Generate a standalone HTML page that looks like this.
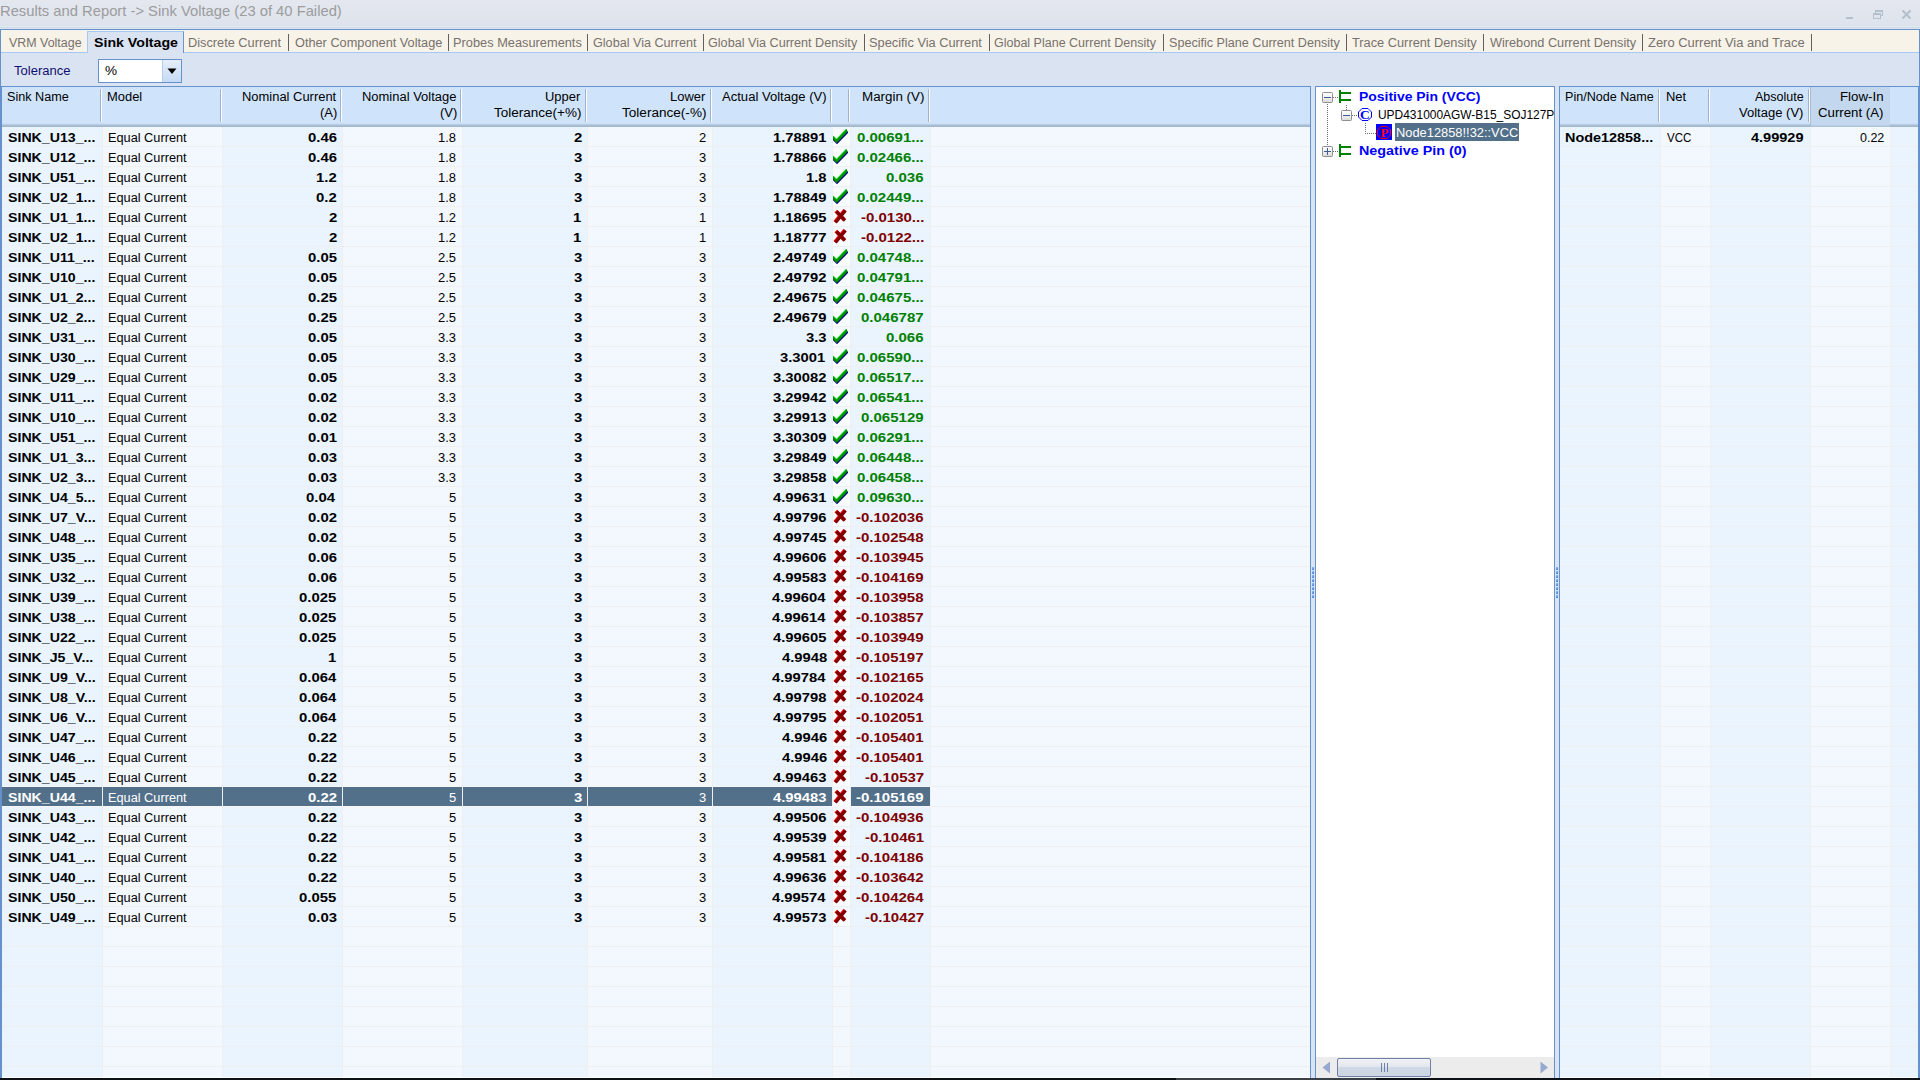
<!DOCTYPE html>
<html><head><meta charset="utf-8"><title>Sink Voltage</title>
<style>
html,body{margin:0;padding:0;width:1920px;height:1080px;overflow:hidden;background:#dae3f2}
body{position:relative;font-family:"Liberation Sans", sans-serif}
.t{position:absolute;white-space:pre;transform-origin:0 0;}
</style></head><body>
<div style="position:absolute;left:0px;top:0px;width:1920px;height:26px;background:linear-gradient(#e4e7ee,#dde3ed)"></div><div style="position:absolute;left:0px;top:26px;width:1920px;height:1px;background:#e2ebf1"></div><div style="position:absolute;left:0px;top:27px;width:1920px;height:1px;background:#cfdae8"></div><div style="position:absolute;left:0px;top:28px;width:1920px;height:1px;background:#dfe5ef"></div><div style="position:absolute;left:1846px;top:17px;width:7px;height:2px;background:#b4bfcc"></div><svg style="position:absolute;left:1870px;top:8px" width="16" height="14"><g fill="none" stroke="#b4bfcc" stroke-width="1"><rect x="5.5" y="2.5" width="7" height="5"/><rect x="3.5" y="5.5" width="7" height="5" fill="#dfe4ed"/></g><rect x="5" y="2" width="8" height="2" fill="#b4bfcc"/><rect x="3" y="5" width="8" height="2" fill="#b4bfcc"/></svg><svg style="position:absolute;left:1900px;top:8px" width="14" height="14"><path d="M2.5 2.5L10.5 10.5M10.5 2.5L2.5 10.5" stroke="#b4bfcc" stroke-width="2"/></svg><div style="position:absolute;left:0px;top:29px;width:1920px;height:1049px;background:#dae3f2"></div><div style="position:absolute;left:0px;top:29px;width:1920px;height:1px;background:#6591cd"></div><div style="position:absolute;left:0px;top:29px;width:1px;height:1049px;background:#6591cd"></div><div style="position:absolute;left:1919px;top:29px;width:1px;height:1049px;background:#6591cd"></div><div style="position:absolute;left:1px;top:30px;width:1918px;height:22px;background:#f7f3e8"></div><div style="position:absolute;left:1px;top:52px;width:1918px;height:1px;background:#a4c8f8"></div><div style="position:absolute;left:87px;top:31px;width:97px;height:22px;background:#dae3f2;border-left:1px solid #a4c8f8;border-top:1px solid #a4c8f8;border-right:1px solid #6a96d0;box-sizing:border-box"></div><div style="position:absolute;left:288px;top:34px;width:1px;height:17px;background:#5f5f5f"></div><div style="position:absolute;left:448px;top:34px;width:1px;height:17px;background:#5f5f5f"></div><div style="position:absolute;left:587px;top:34px;width:1px;height:17px;background:#5f5f5f"></div><div style="position:absolute;left:703px;top:34px;width:1px;height:17px;background:#5f5f5f"></div><div style="position:absolute;left:864px;top:34px;width:1px;height:17px;background:#5f5f5f"></div><div style="position:absolute;left:989px;top:34px;width:1px;height:17px;background:#5f5f5f"></div><div style="position:absolute;left:1163px;top:34px;width:1px;height:17px;background:#5f5f5f"></div><div style="position:absolute;left:1346px;top:34px;width:1px;height:17px;background:#5f5f5f"></div><div style="position:absolute;left:1483px;top:34px;width:1px;height:17px;background:#5f5f5f"></div><div style="position:absolute;left:1642px;top:34px;width:1px;height:17px;background:#5f5f5f"></div><div style="position:absolute;left:1811px;top:34px;width:1px;height:17px;background:#5f5f5f"></div><div style="position:absolute;left:98px;top:59px;width:84px;height:24px;background:#fff;border:1px solid #6591cd;box-sizing:border-box"></div><div style="position:absolute;left:162px;top:60px;width:19px;height:22px;background:linear-gradient(#e6eef9,#c5dbf4);border-left:1px solid #b5cdea;box-sizing:border-box"></div><svg style="position:absolute;left:167px;top:68px" width="11" height="7"><path d="M0.5 0.5H9.5L5 6z" fill="#000"/></svg><div style="position:absolute;left:1px;top:86px;width:1310px;height:992px;background:#f3f7fe"></div><div style="position:absolute;left:1px;top:86px;width:1310px;height:1px;background:#6591cd"></div><div style="position:absolute;left:1px;top:86px;width:1px;height:992px;background:#6591cd"></div><div style="position:absolute;left:1310px;top:86px;width:1px;height:992px;background:#6591cd"></div><div style="position:absolute;left:2px;top:87px;width:1308px;height:37px;background:#cfe4fb"></div><div style="position:absolute;left:2px;top:123px;width:1308px;height:1px;background:#cadef5"></div><div style="position:absolute;left:2px;top:124px;width:1308px;height:1px;background:#b9cde3"></div><div style="position:absolute;left:2px;top:125px;width:1308px;height:1px;background:#a9bdd3"></div><div style="position:absolute;left:2px;top:126px;width:1308px;height:1px;background:#a3b7ce"></div><div style="position:absolute;left:2px;top:127px;width:100px;height:950px;background:#e9f4fe"></div><div style="position:absolute;left:103px;top:127px;width:119px;height:950px;background:#f3f7fe"></div><div style="position:absolute;left:223px;top:127px;width:119px;height:950px;background:#e9f4fe"></div><div style="position:absolute;left:343px;top:127px;width:119px;height:950px;background:#f3f7fe"></div><div style="position:absolute;left:463px;top:127px;width:124px;height:950px;background:#e9f4fe"></div><div style="position:absolute;left:588px;top:127px;width:124px;height:950px;background:#f3f7fe"></div><div style="position:absolute;left:713px;top:127px;width:119px;height:950px;background:#e9f4fe"></div><div style="position:absolute;left:833px;top:127px;width:17px;height:950px;background:#f3f7fe"></div><div style="position:absolute;left:851px;top:127px;width:79px;height:950px;background:#e9f4fe"></div><div style="position:absolute;left:931px;top:127px;width:379px;height:950px;background:#f3f7fe"></div><div style="position:absolute;left:102px;top:127px;width:1px;height:950px;background:#efefef"></div><div style="position:absolute;left:100px;top:89px;width:1px;height:33px;background:#9fb3cc"></div><div style="position:absolute;left:101px;top:89px;width:1px;height:33px;background:#ffffff"></div><div style="position:absolute;left:222px;top:127px;width:1px;height:950px;background:#efefef"></div><div style="position:absolute;left:220px;top:89px;width:1px;height:33px;background:#9fb3cc"></div><div style="position:absolute;left:221px;top:89px;width:1px;height:33px;background:#ffffff"></div><div style="position:absolute;left:342px;top:127px;width:1px;height:950px;background:#efefef"></div><div style="position:absolute;left:340px;top:89px;width:1px;height:33px;background:#9fb3cc"></div><div style="position:absolute;left:341px;top:89px;width:1px;height:33px;background:#ffffff"></div><div style="position:absolute;left:462px;top:127px;width:1px;height:950px;background:#efefef"></div><div style="position:absolute;left:460px;top:89px;width:1px;height:33px;background:#9fb3cc"></div><div style="position:absolute;left:461px;top:89px;width:1px;height:33px;background:#ffffff"></div><div style="position:absolute;left:587px;top:127px;width:1px;height:950px;background:#efefef"></div><div style="position:absolute;left:585px;top:89px;width:1px;height:33px;background:#9fb3cc"></div><div style="position:absolute;left:586px;top:89px;width:1px;height:33px;background:#ffffff"></div><div style="position:absolute;left:712px;top:127px;width:1px;height:950px;background:#efefef"></div><div style="position:absolute;left:710px;top:89px;width:1px;height:33px;background:#9fb3cc"></div><div style="position:absolute;left:711px;top:89px;width:1px;height:33px;background:#ffffff"></div><div style="position:absolute;left:832px;top:127px;width:1px;height:950px;background:#efefef"></div><div style="position:absolute;left:830px;top:89px;width:1px;height:33px;background:#9fb3cc"></div><div style="position:absolute;left:831px;top:89px;width:1px;height:33px;background:#ffffff"></div><div style="position:absolute;left:850px;top:127px;width:1px;height:950px;background:#efefef"></div><div style="position:absolute;left:848px;top:89px;width:1px;height:33px;background:#9fb3cc"></div><div style="position:absolute;left:849px;top:89px;width:1px;height:33px;background:#ffffff"></div><div style="position:absolute;left:930px;top:127px;width:1px;height:950px;background:#efefef"></div><div style="position:absolute;left:928px;top:89px;width:1px;height:33px;background:#9fb3cc"></div><div style="position:absolute;left:929px;top:89px;width:1px;height:33px;background:#ffffff"></div><div style="position:absolute;left:2px;top:146px;width:1308px;height:1px;background:#efefef"></div><div style="position:absolute;left:2px;top:166px;width:1308px;height:1px;background:#efefef"></div><div style="position:absolute;left:2px;top:186px;width:1308px;height:1px;background:#efefef"></div><div style="position:absolute;left:2px;top:206px;width:1308px;height:1px;background:#efefef"></div><div style="position:absolute;left:2px;top:226px;width:1308px;height:1px;background:#efefef"></div><div style="position:absolute;left:2px;top:246px;width:1308px;height:1px;background:#efefef"></div><div style="position:absolute;left:2px;top:266px;width:1308px;height:1px;background:#efefef"></div><div style="position:absolute;left:2px;top:286px;width:1308px;height:1px;background:#efefef"></div><div style="position:absolute;left:2px;top:306px;width:1308px;height:1px;background:#efefef"></div><div style="position:absolute;left:2px;top:326px;width:1308px;height:1px;background:#efefef"></div><div style="position:absolute;left:2px;top:346px;width:1308px;height:1px;background:#efefef"></div><div style="position:absolute;left:2px;top:366px;width:1308px;height:1px;background:#efefef"></div><div style="position:absolute;left:2px;top:386px;width:1308px;height:1px;background:#efefef"></div><div style="position:absolute;left:2px;top:406px;width:1308px;height:1px;background:#efefef"></div><div style="position:absolute;left:2px;top:426px;width:1308px;height:1px;background:#efefef"></div><div style="position:absolute;left:2px;top:446px;width:1308px;height:1px;background:#efefef"></div><div style="position:absolute;left:2px;top:466px;width:1308px;height:1px;background:#efefef"></div><div style="position:absolute;left:2px;top:486px;width:1308px;height:1px;background:#efefef"></div><div style="position:absolute;left:2px;top:506px;width:1308px;height:1px;background:#efefef"></div><div style="position:absolute;left:2px;top:526px;width:1308px;height:1px;background:#efefef"></div><div style="position:absolute;left:2px;top:546px;width:1308px;height:1px;background:#efefef"></div><div style="position:absolute;left:2px;top:566px;width:1308px;height:1px;background:#efefef"></div><div style="position:absolute;left:2px;top:586px;width:1308px;height:1px;background:#efefef"></div><div style="position:absolute;left:2px;top:606px;width:1308px;height:1px;background:#efefef"></div><div style="position:absolute;left:2px;top:626px;width:1308px;height:1px;background:#efefef"></div><div style="position:absolute;left:2px;top:646px;width:1308px;height:1px;background:#efefef"></div><div style="position:absolute;left:2px;top:666px;width:1308px;height:1px;background:#efefef"></div><div style="position:absolute;left:2px;top:686px;width:1308px;height:1px;background:#efefef"></div><div style="position:absolute;left:2px;top:706px;width:1308px;height:1px;background:#efefef"></div><div style="position:absolute;left:2px;top:726px;width:1308px;height:1px;background:#efefef"></div><div style="position:absolute;left:2px;top:746px;width:1308px;height:1px;background:#efefef"></div><div style="position:absolute;left:2px;top:766px;width:1308px;height:1px;background:#efefef"></div><div style="position:absolute;left:2px;top:786px;width:1308px;height:1px;background:#efefef"></div><div style="position:absolute;left:2px;top:806px;width:1308px;height:1px;background:#efefef"></div><div style="position:absolute;left:2px;top:826px;width:1308px;height:1px;background:#efefef"></div><div style="position:absolute;left:2px;top:846px;width:1308px;height:1px;background:#efefef"></div><div style="position:absolute;left:2px;top:866px;width:1308px;height:1px;background:#efefef"></div><div style="position:absolute;left:2px;top:886px;width:1308px;height:1px;background:#efefef"></div><div style="position:absolute;left:2px;top:906px;width:1308px;height:1px;background:#efefef"></div><div style="position:absolute;left:2px;top:926px;width:1308px;height:1px;background:#efefef"></div><div style="position:absolute;left:2px;top:946px;width:1308px;height:1px;background:#efefef"></div><div style="position:absolute;left:2px;top:966px;width:1308px;height:1px;background:#efefef"></div><div style="position:absolute;left:2px;top:986px;width:1308px;height:1px;background:#efefef"></div><div style="position:absolute;left:2px;top:1006px;width:1308px;height:1px;background:#efefef"></div><div style="position:absolute;left:2px;top:1026px;width:1308px;height:1px;background:#efefef"></div><div style="position:absolute;left:2px;top:1046px;width:1308px;height:1px;background:#efefef"></div><div style="position:absolute;left:2px;top:1066px;width:1308px;height:1px;background:#efefef"></div><div style="position:absolute;left:2px;top:1077px;width:1308px;height:1px;background:#ffffff"></div><div style="position:absolute;left:833px;top:129px;width:17px;height:17px;background:#f9fcff"></div><svg style="position:absolute;left:832px;top:128px" width="18" height="18" viewBox="0 0 18 18"><path d="M1 8.2L4.5 11.7L14.5 1.2L16.2 4.8L5 16.2L1 12.2Z" fill="#000080"/><path d="M1.1 7.9L4.5 11.2L14.4 0.9L15.4 3.8L4.7 15.1L1.1 11.4Z" fill="#009000"/><path d="M1.3 7.9L4.5 11.2L14.4 1" fill="none" stroke="#00f000" stroke-width="0.9"/></svg><div style="position:absolute;left:833px;top:149px;width:17px;height:17px;background:#f9fcff"></div><svg style="position:absolute;left:832px;top:148px" width="18" height="18" viewBox="0 0 18 18"><path d="M1 8.2L4.5 11.7L14.5 1.2L16.2 4.8L5 16.2L1 12.2Z" fill="#000080"/><path d="M1.1 7.9L4.5 11.2L14.4 0.9L15.4 3.8L4.7 15.1L1.1 11.4Z" fill="#009000"/><path d="M1.3 7.9L4.5 11.2L14.4 1" fill="none" stroke="#00f000" stroke-width="0.9"/></svg><div style="position:absolute;left:833px;top:169px;width:17px;height:17px;background:#f9fcff"></div><svg style="position:absolute;left:832px;top:168px" width="18" height="18" viewBox="0 0 18 18"><path d="M1 8.2L4.5 11.7L14.5 1.2L16.2 4.8L5 16.2L1 12.2Z" fill="#000080"/><path d="M1.1 7.9L4.5 11.2L14.4 0.9L15.4 3.8L4.7 15.1L1.1 11.4Z" fill="#009000"/><path d="M1.3 7.9L4.5 11.2L14.4 1" fill="none" stroke="#00f000" stroke-width="0.9"/></svg><div style="position:absolute;left:833px;top:189px;width:17px;height:17px;background:#f9fcff"></div><svg style="position:absolute;left:832px;top:188px" width="18" height="18" viewBox="0 0 18 18"><path d="M1 8.2L4.5 11.7L14.5 1.2L16.2 4.8L5 16.2L1 12.2Z" fill="#000080"/><path d="M1.1 7.9L4.5 11.2L14.4 0.9L15.4 3.8L4.7 15.1L1.1 11.4Z" fill="#009000"/><path d="M1.3 7.9L4.5 11.2L14.4 1" fill="none" stroke="#00f000" stroke-width="0.9"/></svg><div style="position:absolute;left:833px;top:209px;width:17px;height:17px;background:#f9fcff"></div><svg style="position:absolute;left:832px;top:209px" width="18" height="18" viewBox="0 0 18 18"><path d="M4.5 2.5L13 11.5M13.5 1.5L3.5 13.5" stroke="#ff0000" stroke-width="3.5" transform="translate(-0.7,-0.5)"/><path d="M4.5 2.5L13 11.5M13.5 1.5L3.5 13.5" stroke="#800000" stroke-width="3.3"/></svg><div style="position:absolute;left:833px;top:229px;width:17px;height:17px;background:#f9fcff"></div><svg style="position:absolute;left:832px;top:229px" width="18" height="18" viewBox="0 0 18 18"><path d="M4.5 2.5L13 11.5M13.5 1.5L3.5 13.5" stroke="#ff0000" stroke-width="3.5" transform="translate(-0.7,-0.5)"/><path d="M4.5 2.5L13 11.5M13.5 1.5L3.5 13.5" stroke="#800000" stroke-width="3.3"/></svg><div style="position:absolute;left:833px;top:249px;width:17px;height:17px;background:#f9fcff"></div><svg style="position:absolute;left:832px;top:248px" width="18" height="18" viewBox="0 0 18 18"><path d="M1 8.2L4.5 11.7L14.5 1.2L16.2 4.8L5 16.2L1 12.2Z" fill="#000080"/><path d="M1.1 7.9L4.5 11.2L14.4 0.9L15.4 3.8L4.7 15.1L1.1 11.4Z" fill="#009000"/><path d="M1.3 7.9L4.5 11.2L14.4 1" fill="none" stroke="#00f000" stroke-width="0.9"/></svg><div style="position:absolute;left:833px;top:269px;width:17px;height:17px;background:#f9fcff"></div><svg style="position:absolute;left:832px;top:268px" width="18" height="18" viewBox="0 0 18 18"><path d="M1 8.2L4.5 11.7L14.5 1.2L16.2 4.8L5 16.2L1 12.2Z" fill="#000080"/><path d="M1.1 7.9L4.5 11.2L14.4 0.9L15.4 3.8L4.7 15.1L1.1 11.4Z" fill="#009000"/><path d="M1.3 7.9L4.5 11.2L14.4 1" fill="none" stroke="#00f000" stroke-width="0.9"/></svg><div style="position:absolute;left:833px;top:289px;width:17px;height:17px;background:#f9fcff"></div><svg style="position:absolute;left:832px;top:288px" width="18" height="18" viewBox="0 0 18 18"><path d="M1 8.2L4.5 11.7L14.5 1.2L16.2 4.8L5 16.2L1 12.2Z" fill="#000080"/><path d="M1.1 7.9L4.5 11.2L14.4 0.9L15.4 3.8L4.7 15.1L1.1 11.4Z" fill="#009000"/><path d="M1.3 7.9L4.5 11.2L14.4 1" fill="none" stroke="#00f000" stroke-width="0.9"/></svg><div style="position:absolute;left:833px;top:309px;width:17px;height:17px;background:#f9fcff"></div><svg style="position:absolute;left:832px;top:308px" width="18" height="18" viewBox="0 0 18 18"><path d="M1 8.2L4.5 11.7L14.5 1.2L16.2 4.8L5 16.2L1 12.2Z" fill="#000080"/><path d="M1.1 7.9L4.5 11.2L14.4 0.9L15.4 3.8L4.7 15.1L1.1 11.4Z" fill="#009000"/><path d="M1.3 7.9L4.5 11.2L14.4 1" fill="none" stroke="#00f000" stroke-width="0.9"/></svg><div style="position:absolute;left:833px;top:329px;width:17px;height:17px;background:#f9fcff"></div><svg style="position:absolute;left:832px;top:328px" width="18" height="18" viewBox="0 0 18 18"><path d="M1 8.2L4.5 11.7L14.5 1.2L16.2 4.8L5 16.2L1 12.2Z" fill="#000080"/><path d="M1.1 7.9L4.5 11.2L14.4 0.9L15.4 3.8L4.7 15.1L1.1 11.4Z" fill="#009000"/><path d="M1.3 7.9L4.5 11.2L14.4 1" fill="none" stroke="#00f000" stroke-width="0.9"/></svg><div style="position:absolute;left:833px;top:349px;width:17px;height:17px;background:#f9fcff"></div><svg style="position:absolute;left:832px;top:348px" width="18" height="18" viewBox="0 0 18 18"><path d="M1 8.2L4.5 11.7L14.5 1.2L16.2 4.8L5 16.2L1 12.2Z" fill="#000080"/><path d="M1.1 7.9L4.5 11.2L14.4 0.9L15.4 3.8L4.7 15.1L1.1 11.4Z" fill="#009000"/><path d="M1.3 7.9L4.5 11.2L14.4 1" fill="none" stroke="#00f000" stroke-width="0.9"/></svg><div style="position:absolute;left:833px;top:369px;width:17px;height:17px;background:#f9fcff"></div><svg style="position:absolute;left:832px;top:368px" width="18" height="18" viewBox="0 0 18 18"><path d="M1 8.2L4.5 11.7L14.5 1.2L16.2 4.8L5 16.2L1 12.2Z" fill="#000080"/><path d="M1.1 7.9L4.5 11.2L14.4 0.9L15.4 3.8L4.7 15.1L1.1 11.4Z" fill="#009000"/><path d="M1.3 7.9L4.5 11.2L14.4 1" fill="none" stroke="#00f000" stroke-width="0.9"/></svg><div style="position:absolute;left:833px;top:389px;width:17px;height:17px;background:#f9fcff"></div><svg style="position:absolute;left:832px;top:388px" width="18" height="18" viewBox="0 0 18 18"><path d="M1 8.2L4.5 11.7L14.5 1.2L16.2 4.8L5 16.2L1 12.2Z" fill="#000080"/><path d="M1.1 7.9L4.5 11.2L14.4 0.9L15.4 3.8L4.7 15.1L1.1 11.4Z" fill="#009000"/><path d="M1.3 7.9L4.5 11.2L14.4 1" fill="none" stroke="#00f000" stroke-width="0.9"/></svg><div style="position:absolute;left:833px;top:409px;width:17px;height:17px;background:#f9fcff"></div><svg style="position:absolute;left:832px;top:408px" width="18" height="18" viewBox="0 0 18 18"><path d="M1 8.2L4.5 11.7L14.5 1.2L16.2 4.8L5 16.2L1 12.2Z" fill="#000080"/><path d="M1.1 7.9L4.5 11.2L14.4 0.9L15.4 3.8L4.7 15.1L1.1 11.4Z" fill="#009000"/><path d="M1.3 7.9L4.5 11.2L14.4 1" fill="none" stroke="#00f000" stroke-width="0.9"/></svg><div style="position:absolute;left:833px;top:429px;width:17px;height:17px;background:#f9fcff"></div><svg style="position:absolute;left:832px;top:428px" width="18" height="18" viewBox="0 0 18 18"><path d="M1 8.2L4.5 11.7L14.5 1.2L16.2 4.8L5 16.2L1 12.2Z" fill="#000080"/><path d="M1.1 7.9L4.5 11.2L14.4 0.9L15.4 3.8L4.7 15.1L1.1 11.4Z" fill="#009000"/><path d="M1.3 7.9L4.5 11.2L14.4 1" fill="none" stroke="#00f000" stroke-width="0.9"/></svg><div style="position:absolute;left:833px;top:449px;width:17px;height:17px;background:#f9fcff"></div><svg style="position:absolute;left:832px;top:448px" width="18" height="18" viewBox="0 0 18 18"><path d="M1 8.2L4.5 11.7L14.5 1.2L16.2 4.8L5 16.2L1 12.2Z" fill="#000080"/><path d="M1.1 7.9L4.5 11.2L14.4 0.9L15.4 3.8L4.7 15.1L1.1 11.4Z" fill="#009000"/><path d="M1.3 7.9L4.5 11.2L14.4 1" fill="none" stroke="#00f000" stroke-width="0.9"/></svg><div style="position:absolute;left:833px;top:469px;width:17px;height:17px;background:#f9fcff"></div><svg style="position:absolute;left:832px;top:468px" width="18" height="18" viewBox="0 0 18 18"><path d="M1 8.2L4.5 11.7L14.5 1.2L16.2 4.8L5 16.2L1 12.2Z" fill="#000080"/><path d="M1.1 7.9L4.5 11.2L14.4 0.9L15.4 3.8L4.7 15.1L1.1 11.4Z" fill="#009000"/><path d="M1.3 7.9L4.5 11.2L14.4 1" fill="none" stroke="#00f000" stroke-width="0.9"/></svg><div style="position:absolute;left:833px;top:489px;width:17px;height:17px;background:#f9fcff"></div><svg style="position:absolute;left:832px;top:488px" width="18" height="18" viewBox="0 0 18 18"><path d="M1 8.2L4.5 11.7L14.5 1.2L16.2 4.8L5 16.2L1 12.2Z" fill="#000080"/><path d="M1.1 7.9L4.5 11.2L14.4 0.9L15.4 3.8L4.7 15.1L1.1 11.4Z" fill="#009000"/><path d="M1.3 7.9L4.5 11.2L14.4 1" fill="none" stroke="#00f000" stroke-width="0.9"/></svg><div style="position:absolute;left:833px;top:509px;width:17px;height:17px;background:#f9fcff"></div><svg style="position:absolute;left:832px;top:509px" width="18" height="18" viewBox="0 0 18 18"><path d="M4.5 2.5L13 11.5M13.5 1.5L3.5 13.5" stroke="#ff0000" stroke-width="3.5" transform="translate(-0.7,-0.5)"/><path d="M4.5 2.5L13 11.5M13.5 1.5L3.5 13.5" stroke="#800000" stroke-width="3.3"/></svg><div style="position:absolute;left:833px;top:529px;width:17px;height:17px;background:#f9fcff"></div><svg style="position:absolute;left:832px;top:529px" width="18" height="18" viewBox="0 0 18 18"><path d="M4.5 2.5L13 11.5M13.5 1.5L3.5 13.5" stroke="#ff0000" stroke-width="3.5" transform="translate(-0.7,-0.5)"/><path d="M4.5 2.5L13 11.5M13.5 1.5L3.5 13.5" stroke="#800000" stroke-width="3.3"/></svg><div style="position:absolute;left:833px;top:549px;width:17px;height:17px;background:#f9fcff"></div><svg style="position:absolute;left:832px;top:549px" width="18" height="18" viewBox="0 0 18 18"><path d="M4.5 2.5L13 11.5M13.5 1.5L3.5 13.5" stroke="#ff0000" stroke-width="3.5" transform="translate(-0.7,-0.5)"/><path d="M4.5 2.5L13 11.5M13.5 1.5L3.5 13.5" stroke="#800000" stroke-width="3.3"/></svg><div style="position:absolute;left:833px;top:569px;width:17px;height:17px;background:#f9fcff"></div><svg style="position:absolute;left:832px;top:569px" width="18" height="18" viewBox="0 0 18 18"><path d="M4.5 2.5L13 11.5M13.5 1.5L3.5 13.5" stroke="#ff0000" stroke-width="3.5" transform="translate(-0.7,-0.5)"/><path d="M4.5 2.5L13 11.5M13.5 1.5L3.5 13.5" stroke="#800000" stroke-width="3.3"/></svg><div style="position:absolute;left:833px;top:589px;width:17px;height:17px;background:#f9fcff"></div><svg style="position:absolute;left:832px;top:589px" width="18" height="18" viewBox="0 0 18 18"><path d="M4.5 2.5L13 11.5M13.5 1.5L3.5 13.5" stroke="#ff0000" stroke-width="3.5" transform="translate(-0.7,-0.5)"/><path d="M4.5 2.5L13 11.5M13.5 1.5L3.5 13.5" stroke="#800000" stroke-width="3.3"/></svg><div style="position:absolute;left:833px;top:609px;width:17px;height:17px;background:#f9fcff"></div><svg style="position:absolute;left:832px;top:609px" width="18" height="18" viewBox="0 0 18 18"><path d="M4.5 2.5L13 11.5M13.5 1.5L3.5 13.5" stroke="#ff0000" stroke-width="3.5" transform="translate(-0.7,-0.5)"/><path d="M4.5 2.5L13 11.5M13.5 1.5L3.5 13.5" stroke="#800000" stroke-width="3.3"/></svg><div style="position:absolute;left:833px;top:629px;width:17px;height:17px;background:#f9fcff"></div><svg style="position:absolute;left:832px;top:629px" width="18" height="18" viewBox="0 0 18 18"><path d="M4.5 2.5L13 11.5M13.5 1.5L3.5 13.5" stroke="#ff0000" stroke-width="3.5" transform="translate(-0.7,-0.5)"/><path d="M4.5 2.5L13 11.5M13.5 1.5L3.5 13.5" stroke="#800000" stroke-width="3.3"/></svg><div style="position:absolute;left:833px;top:649px;width:17px;height:17px;background:#f9fcff"></div><svg style="position:absolute;left:832px;top:649px" width="18" height="18" viewBox="0 0 18 18"><path d="M4.5 2.5L13 11.5M13.5 1.5L3.5 13.5" stroke="#ff0000" stroke-width="3.5" transform="translate(-0.7,-0.5)"/><path d="M4.5 2.5L13 11.5M13.5 1.5L3.5 13.5" stroke="#800000" stroke-width="3.3"/></svg><div style="position:absolute;left:833px;top:669px;width:17px;height:17px;background:#f9fcff"></div><svg style="position:absolute;left:832px;top:669px" width="18" height="18" viewBox="0 0 18 18"><path d="M4.5 2.5L13 11.5M13.5 1.5L3.5 13.5" stroke="#ff0000" stroke-width="3.5" transform="translate(-0.7,-0.5)"/><path d="M4.5 2.5L13 11.5M13.5 1.5L3.5 13.5" stroke="#800000" stroke-width="3.3"/></svg><div style="position:absolute;left:833px;top:689px;width:17px;height:17px;background:#f9fcff"></div><svg style="position:absolute;left:832px;top:689px" width="18" height="18" viewBox="0 0 18 18"><path d="M4.5 2.5L13 11.5M13.5 1.5L3.5 13.5" stroke="#ff0000" stroke-width="3.5" transform="translate(-0.7,-0.5)"/><path d="M4.5 2.5L13 11.5M13.5 1.5L3.5 13.5" stroke="#800000" stroke-width="3.3"/></svg><div style="position:absolute;left:833px;top:709px;width:17px;height:17px;background:#f9fcff"></div><svg style="position:absolute;left:832px;top:709px" width="18" height="18" viewBox="0 0 18 18"><path d="M4.5 2.5L13 11.5M13.5 1.5L3.5 13.5" stroke="#ff0000" stroke-width="3.5" transform="translate(-0.7,-0.5)"/><path d="M4.5 2.5L13 11.5M13.5 1.5L3.5 13.5" stroke="#800000" stroke-width="3.3"/></svg><div style="position:absolute;left:833px;top:729px;width:17px;height:17px;background:#f9fcff"></div><svg style="position:absolute;left:832px;top:729px" width="18" height="18" viewBox="0 0 18 18"><path d="M4.5 2.5L13 11.5M13.5 1.5L3.5 13.5" stroke="#ff0000" stroke-width="3.5" transform="translate(-0.7,-0.5)"/><path d="M4.5 2.5L13 11.5M13.5 1.5L3.5 13.5" stroke="#800000" stroke-width="3.3"/></svg><div style="position:absolute;left:833px;top:749px;width:17px;height:17px;background:#f9fcff"></div><svg style="position:absolute;left:832px;top:749px" width="18" height="18" viewBox="0 0 18 18"><path d="M4.5 2.5L13 11.5M13.5 1.5L3.5 13.5" stroke="#ff0000" stroke-width="3.5" transform="translate(-0.7,-0.5)"/><path d="M4.5 2.5L13 11.5M13.5 1.5L3.5 13.5" stroke="#800000" stroke-width="3.3"/></svg><div style="position:absolute;left:833px;top:769px;width:17px;height:17px;background:#f9fcff"></div><svg style="position:absolute;left:832px;top:769px" width="18" height="18" viewBox="0 0 18 18"><path d="M4.5 2.5L13 11.5M13.5 1.5L3.5 13.5" stroke="#ff0000" stroke-width="3.5" transform="translate(-0.7,-0.5)"/><path d="M4.5 2.5L13 11.5M13.5 1.5L3.5 13.5" stroke="#800000" stroke-width="3.3"/></svg><div style="position:absolute;left:2px;top:787px;width:100px;height:19px;background:#53708a"></div><div style="position:absolute;left:103px;top:787px;width:119px;height:19px;background:#53708a"></div><div style="position:absolute;left:223px;top:787px;width:119px;height:19px;background:#53708a"></div><div style="position:absolute;left:343px;top:787px;width:119px;height:19px;background:#53708a"></div><div style="position:absolute;left:463px;top:787px;width:124px;height:19px;background:#53708a"></div><div style="position:absolute;left:588px;top:787px;width:124px;height:19px;background:#53708a"></div><div style="position:absolute;left:713px;top:787px;width:119px;height:19px;background:#53708a"></div><div style="position:absolute;left:851px;top:787px;width:79px;height:19px;background:#53708a"></div><div style="position:absolute;left:2px;top:786px;width:929px;height:1px;background:#f6f6f6"></div><div style="position:absolute;left:2px;top:806px;width:929px;height:1px;background:#f6f6f6"></div><div style="position:absolute;left:833px;top:789px;width:17px;height:17px;background:#f9fcff"></div><svg style="position:absolute;left:832px;top:789px" width="18" height="18" viewBox="0 0 18 18"><path d="M4.5 2.5L13 11.5M13.5 1.5L3.5 13.5" stroke="#ff0000" stroke-width="3.5" transform="translate(-0.7,-0.5)"/><path d="M4.5 2.5L13 11.5M13.5 1.5L3.5 13.5" stroke="#800000" stroke-width="3.3"/></svg><div style="position:absolute;left:833px;top:809px;width:17px;height:17px;background:#f9fcff"></div><svg style="position:absolute;left:832px;top:809px" width="18" height="18" viewBox="0 0 18 18"><path d="M4.5 2.5L13 11.5M13.5 1.5L3.5 13.5" stroke="#ff0000" stroke-width="3.5" transform="translate(-0.7,-0.5)"/><path d="M4.5 2.5L13 11.5M13.5 1.5L3.5 13.5" stroke="#800000" stroke-width="3.3"/></svg><div style="position:absolute;left:833px;top:829px;width:17px;height:17px;background:#f9fcff"></div><svg style="position:absolute;left:832px;top:829px" width="18" height="18" viewBox="0 0 18 18"><path d="M4.5 2.5L13 11.5M13.5 1.5L3.5 13.5" stroke="#ff0000" stroke-width="3.5" transform="translate(-0.7,-0.5)"/><path d="M4.5 2.5L13 11.5M13.5 1.5L3.5 13.5" stroke="#800000" stroke-width="3.3"/></svg><div style="position:absolute;left:833px;top:849px;width:17px;height:17px;background:#f9fcff"></div><svg style="position:absolute;left:832px;top:849px" width="18" height="18" viewBox="0 0 18 18"><path d="M4.5 2.5L13 11.5M13.5 1.5L3.5 13.5" stroke="#ff0000" stroke-width="3.5" transform="translate(-0.7,-0.5)"/><path d="M4.5 2.5L13 11.5M13.5 1.5L3.5 13.5" stroke="#800000" stroke-width="3.3"/></svg><div style="position:absolute;left:833px;top:869px;width:17px;height:17px;background:#f9fcff"></div><svg style="position:absolute;left:832px;top:869px" width="18" height="18" viewBox="0 0 18 18"><path d="M4.5 2.5L13 11.5M13.5 1.5L3.5 13.5" stroke="#ff0000" stroke-width="3.5" transform="translate(-0.7,-0.5)"/><path d="M4.5 2.5L13 11.5M13.5 1.5L3.5 13.5" stroke="#800000" stroke-width="3.3"/></svg><div style="position:absolute;left:833px;top:889px;width:17px;height:17px;background:#f9fcff"></div><svg style="position:absolute;left:832px;top:889px" width="18" height="18" viewBox="0 0 18 18"><path d="M4.5 2.5L13 11.5M13.5 1.5L3.5 13.5" stroke="#ff0000" stroke-width="3.5" transform="translate(-0.7,-0.5)"/><path d="M4.5 2.5L13 11.5M13.5 1.5L3.5 13.5" stroke="#800000" stroke-width="3.3"/></svg><div style="position:absolute;left:833px;top:909px;width:17px;height:17px;background:#f9fcff"></div><svg style="position:absolute;left:832px;top:909px" width="18" height="18" viewBox="0 0 18 18"><path d="M4.5 2.5L13 11.5M13.5 1.5L3.5 13.5" stroke="#ff0000" stroke-width="3.5" transform="translate(-0.7,-0.5)"/><path d="M4.5 2.5L13 11.5M13.5 1.5L3.5 13.5" stroke="#800000" stroke-width="3.3"/></svg><div style="position:absolute;left:1312px;top:567px;width:2px;height:3px;background:linear-gradient(135deg,#9cc8ff,#3f6fc0)"></div><div style="position:absolute;left:1312px;top:571px;width:2px;height:3px;background:linear-gradient(135deg,#9cc8ff,#3f6fc0)"></div><div style="position:absolute;left:1312px;top:575px;width:2px;height:3px;background:linear-gradient(135deg,#9cc8ff,#3f6fc0)"></div><div style="position:absolute;left:1312px;top:579px;width:2px;height:3px;background:linear-gradient(135deg,#9cc8ff,#3f6fc0)"></div><div style="position:absolute;left:1312px;top:583px;width:2px;height:3px;background:linear-gradient(135deg,#9cc8ff,#3f6fc0)"></div><div style="position:absolute;left:1312px;top:587px;width:2px;height:3px;background:linear-gradient(135deg,#9cc8ff,#3f6fc0)"></div><div style="position:absolute;left:1312px;top:591px;width:2px;height:3px;background:linear-gradient(135deg,#9cc8ff,#3f6fc0)"></div><div style="position:absolute;left:1312px;top:595px;width:2px;height:3px;background:linear-gradient(135deg,#9cc8ff,#3f6fc0)"></div><div style="position:absolute;left:1556px;top:567px;width:2px;height:3px;background:linear-gradient(135deg,#9cc8ff,#3f6fc0)"></div><div style="position:absolute;left:1556px;top:571px;width:2px;height:3px;background:linear-gradient(135deg,#9cc8ff,#3f6fc0)"></div><div style="position:absolute;left:1556px;top:575px;width:2px;height:3px;background:linear-gradient(135deg,#9cc8ff,#3f6fc0)"></div><div style="position:absolute;left:1556px;top:579px;width:2px;height:3px;background:linear-gradient(135deg,#9cc8ff,#3f6fc0)"></div><div style="position:absolute;left:1556px;top:583px;width:2px;height:3px;background:linear-gradient(135deg,#9cc8ff,#3f6fc0)"></div><div style="position:absolute;left:1556px;top:587px;width:2px;height:3px;background:linear-gradient(135deg,#9cc8ff,#3f6fc0)"></div><div style="position:absolute;left:1556px;top:591px;width:2px;height:3px;background:linear-gradient(135deg,#9cc8ff,#3f6fc0)"></div><div style="position:absolute;left:1556px;top:595px;width:2px;height:3px;background:linear-gradient(135deg,#9cc8ff,#3f6fc0)"></div><div style="position:absolute;left:1315px;top:86px;width:240px;height:992px;background:#fff"></div><div style="position:absolute;left:1315px;top:86px;width:240px;height:1px;background:#6591cd"></div><div style="position:absolute;left:1315px;top:86px;width:1px;height:992px;background:#6591cd"></div><div style="position:absolute;left:1554px;top:86px;width:1px;height:992px;background:#6591cd"></div><svg width="0" height="0" style="position:absolute"><defs><linearGradient id="eg" x1="0" y1="0" x2="0" y2="1"><stop offset="0" stop-color="#fdfdfd"/><stop offset="0.5" stop-color="#f1f1f1"/><stop offset="1" stop-color="#d9d9d9"/></linearGradient></defs></svg><svg style="position:absolute;left:1322px;top:92px" width="11" height="11"><rect x="0.5" y="0.5" width="10" height="10" rx="1" fill="url(#eg)" stroke="#8e8e8e"/><rect x="2" y="5" width="7" height="1" fill="#3c5a96"/></svg><div style="position:absolute;left:1333px;top:97px;width:1px;height:1px;background:#6e6e6e"></div><div style="position:absolute;left:1335px;top:97px;width:1px;height:1px;background:#6e6e6e"></div><div style="position:absolute;left:1337px;top:97px;width:1px;height:1px;background:#6e6e6e"></div><svg style="position:absolute;left:1339px;top:90px" width="13" height="14"><path d="M1 0V13M0 3H12M0 10H12" stroke="#008000" stroke-width="2" fill="none"/></svg><div style="position:absolute;left:1327px;top:104px;width:1px;height:1px;background:#6e6e6e"></div><div style="position:absolute;left:1327px;top:106px;width:1px;height:1px;background:#6e6e6e"></div><div style="position:absolute;left:1327px;top:108px;width:1px;height:1px;background:#6e6e6e"></div><div style="position:absolute;left:1327px;top:110px;width:1px;height:1px;background:#6e6e6e"></div><div style="position:absolute;left:1327px;top:112px;width:1px;height:1px;background:#6e6e6e"></div><div style="position:absolute;left:1327px;top:114px;width:1px;height:1px;background:#6e6e6e"></div><div style="position:absolute;left:1327px;top:116px;width:1px;height:1px;background:#6e6e6e"></div><div style="position:absolute;left:1327px;top:118px;width:1px;height:1px;background:#6e6e6e"></div><div style="position:absolute;left:1327px;top:120px;width:1px;height:1px;background:#6e6e6e"></div><div style="position:absolute;left:1327px;top:122px;width:1px;height:1px;background:#6e6e6e"></div><div style="position:absolute;left:1327px;top:124px;width:1px;height:1px;background:#6e6e6e"></div><div style="position:absolute;left:1327px;top:126px;width:1px;height:1px;background:#6e6e6e"></div><div style="position:absolute;left:1327px;top:128px;width:1px;height:1px;background:#6e6e6e"></div><div style="position:absolute;left:1327px;top:130px;width:1px;height:1px;background:#6e6e6e"></div><div style="position:absolute;left:1327px;top:132px;width:1px;height:1px;background:#6e6e6e"></div><div style="position:absolute;left:1327px;top:134px;width:1px;height:1px;background:#6e6e6e"></div><div style="position:absolute;left:1327px;top:136px;width:1px;height:1px;background:#6e6e6e"></div><div style="position:absolute;left:1327px;top:138px;width:1px;height:1px;background:#6e6e6e"></div><div style="position:absolute;left:1327px;top:140px;width:1px;height:1px;background:#6e6e6e"></div><div style="position:absolute;left:1327px;top:142px;width:1px;height:1px;background:#6e6e6e"></div><div style="position:absolute;left:1327px;top:144px;width:1px;height:1px;background:#6e6e6e"></div><div style="position:absolute;left:1346px;top:105px;width:1px;height:1px;background:#6e6e6e"></div><div style="position:absolute;left:1346px;top:107px;width:1px;height:1px;background:#6e6e6e"></div><div style="position:absolute;left:1346px;top:109px;width:1px;height:1px;background:#6e6e6e"></div><svg style="position:absolute;left:1341px;top:110px" width="11" height="11"><rect x="0.5" y="0.5" width="10" height="10" rx="1" fill="url(#eg)" stroke="#8e8e8e"/><rect x="2" y="5" width="7" height="1" fill="#3c5a96"/></svg><div style="position:absolute;left:1352px;top:115px;width:1px;height:1px;background:#6e6e6e"></div><div style="position:absolute;left:1354px;top:115px;width:1px;height:1px;background:#6e6e6e"></div><div style="position:absolute;left:1356px;top:115px;width:1px;height:1px;background:#6e6e6e"></div><svg style="position:absolute;left:1358px;top:108px" width="15" height="14"><path d="M4 0.5H10L13.5 4V9L10 12.5H4L0.5 9V4Z" fill="none" stroke="#0000ff" stroke-width="1"/><text x="6.8" y="10.9" text-anchor="middle" font-family="Liberation Serif" font-size="13.5" font-weight="bold" fill="#0000ff">C</text></svg><div style="position:absolute;left:1365px;top:123px;width:1px;height:1px;background:#6e6e6e"></div><div style="position:absolute;left:1365px;top:125px;width:1px;height:1px;background:#6e6e6e"></div><div style="position:absolute;left:1365px;top:127px;width:1px;height:1px;background:#6e6e6e"></div><div style="position:absolute;left:1365px;top:129px;width:1px;height:1px;background:#6e6e6e"></div><div style="position:absolute;left:1365px;top:131px;width:1px;height:1px;background:#6e6e6e"></div><div style="position:absolute;left:1365px;top:133px;width:1px;height:1px;background:#6e6e6e"></div><div style="position:absolute;left:1365px;top:133px;width:1px;height:1px;background:#6e6e6e"></div><div style="position:absolute;left:1367px;top:133px;width:1px;height:1px;background:#6e6e6e"></div><div style="position:absolute;left:1369px;top:133px;width:1px;height:1px;background:#6e6e6e"></div><div style="position:absolute;left:1371px;top:133px;width:1px;height:1px;background:#6e6e6e"></div><div style="position:absolute;left:1373px;top:133px;width:1px;height:1px;background:#6e6e6e"></div><div style="position:absolute;left:1375px;top:133px;width:1px;height:1px;background:#6e6e6e"></div><svg style="position:absolute;left:1376px;top:124px" width="16" height="16"><rect width="16" height="16" fill="#0000ff"/><path d="M5 2.5H11L14.5 6V11L11 14.5H5L1.5 11V6Z" fill="none" stroke="#ff0000" stroke-width="1"/><text x="8.6" y="12.9" text-anchor="middle" font-family="Liberation Serif" font-size="13" font-weight="bold" fill="#ff0000">P</text></svg><div style="position:absolute;left:1395px;top:123px;width:124px;height:18px;background:#53708a"></div><svg style="position:absolute;left:1322px;top:146px" width="11" height="11"><rect x="0.5" y="0.5" width="10" height="10" rx="1" fill="url(#eg)" stroke="#8e8e8e"/><rect x="2" y="5" width="7" height="1" fill="#3c5a96"/><rect x="5" y="2" width="1" height="7" fill="#3c5a96"/></svg><div style="position:absolute;left:1333px;top:151px;width:1px;height:1px;background:#6e6e6e"></div><div style="position:absolute;left:1335px;top:151px;width:1px;height:1px;background:#6e6e6e"></div><div style="position:absolute;left:1337px;top:151px;width:1px;height:1px;background:#6e6e6e"></div><svg style="position:absolute;left:1339px;top:144px" width="13" height="14"><path d="M1 0V13M0 3H12M0 10H12" stroke="#008000" stroke-width="2" fill="none"/></svg><div style="position:absolute;left:1316px;top:1057px;width:238px;height:21px;background:#ececec"></div><svg style="position:absolute;left:1322px;top:1061px" width="9" height="13"><path d="M8 0.5V12.5L0.5 6.5Z" fill="#97a9d0"/></svg><svg style="position:absolute;left:1540px;top:1061px" width="9" height="13"><path d="M0.5 0.5V12.5L8 6.5Z" fill="#97a9d0"/></svg><div style="position:absolute;left:1337px;top:1058px;width:94px;height:19px;background:linear-gradient(#f1f2f5 0%,#e3e7ee 45%,#cfd8e5 50%,#cbd5e3 100%);border:1px solid #6f7fa8;border-radius:2px;box-sizing:border-box"></div><div style="position:absolute;left:1381px;top:1063px;width:1px;height:9px;background:#6f7fa8"></div><div style="position:absolute;left:1384px;top:1063px;width:1px;height:9px;background:#6f7fa8"></div><div style="position:absolute;left:1387px;top:1063px;width:1px;height:9px;background:#6f7fa8"></div><div style="position:absolute;left:1559px;top:86px;width:361px;height:992px;background:#f3f7fe"></div><div style="position:absolute;left:1559px;top:86px;width:361px;height:1px;background:#6591cd"></div><div style="position:absolute;left:1559px;top:86px;width:1px;height:992px;background:#6591cd"></div><div style="position:absolute;left:1918px;top:86px;width:2px;height:992px;background:#6591cd"></div><div style="position:absolute;left:1560px;top:87px;width:358px;height:37px;background:#cfe4fb"></div><div style="position:absolute;left:1560px;top:123px;width:358px;height:1px;background:#cadef5"></div><div style="position:absolute;left:1560px;top:124px;width:358px;height:1px;background:#b9cde3"></div><div style="position:absolute;left:1560px;top:125px;width:358px;height:1px;background:#a9bdd3"></div><div style="position:absolute;left:1560px;top:126px;width:358px;height:1px;background:#a3b7ce"></div><div style="position:absolute;left:1810px;top:87px;width:80px;height:39px;background:#c3d8ee"></div><div style="position:absolute;left:1810px;top:87px;width:1px;height:40px;background:#a9bdd3"></div><div style="position:absolute;left:1811px;top:125px;width:79px;height:1px;background:#b8cce2"></div><div style="position:absolute;left:1811px;top:126px;width:79px;height:1px;background:#aec2d8"></div><div style="position:absolute;left:1560px;top:127px;width:100px;height:950px;background:#e9f4fe"></div><div style="position:absolute;left:1661px;top:127px;width:49px;height:950px;background:#f3f7fe"></div><div style="position:absolute;left:1711px;top:127px;width:99px;height:950px;background:#e9f4fe"></div><div style="position:absolute;left:1811px;top:127px;width:79px;height:950px;background:#f3f7fe"></div><div style="position:absolute;left:1891px;top:127px;width:27px;height:950px;background:#e9f4fe"></div><div style="position:absolute;left:1660px;top:127px;width:1px;height:950px;background:#efefef"></div><div style="position:absolute;left:1710px;top:127px;width:1px;height:950px;background:#efefef"></div><div style="position:absolute;left:1810px;top:127px;width:1px;height:950px;background:#efefef"></div><div style="position:absolute;left:1890px;top:127px;width:1px;height:950px;background:#efefef"></div><div style="position:absolute;left:1658px;top:89px;width:1px;height:33px;background:#9fb3cc"></div><div style="position:absolute;left:1659px;top:89px;width:1px;height:33px;background:#ffffff"></div><div style="position:absolute;left:1708px;top:89px;width:1px;height:33px;background:#9fb3cc"></div><div style="position:absolute;left:1709px;top:89px;width:1px;height:33px;background:#ffffff"></div><div style="position:absolute;left:1808px;top:89px;width:1px;height:33px;background:#9fb3cc"></div><div style="position:absolute;left:1809px;top:89px;width:1px;height:33px;background:#ffffff"></div><div style="position:absolute;left:1560px;top:146px;width:358px;height:1px;background:#efefef"></div><div style="position:absolute;left:1560px;top:166px;width:358px;height:1px;background:#efefef"></div><div style="position:absolute;left:1560px;top:186px;width:358px;height:1px;background:#efefef"></div><div style="position:absolute;left:1560px;top:206px;width:358px;height:1px;background:#efefef"></div><div style="position:absolute;left:1560px;top:226px;width:358px;height:1px;background:#efefef"></div><div style="position:absolute;left:1560px;top:246px;width:358px;height:1px;background:#efefef"></div><div style="position:absolute;left:1560px;top:266px;width:358px;height:1px;background:#efefef"></div><div style="position:absolute;left:1560px;top:286px;width:358px;height:1px;background:#efefef"></div><div style="position:absolute;left:1560px;top:306px;width:358px;height:1px;background:#efefef"></div><div style="position:absolute;left:1560px;top:326px;width:358px;height:1px;background:#efefef"></div><div style="position:absolute;left:1560px;top:346px;width:358px;height:1px;background:#efefef"></div><div style="position:absolute;left:1560px;top:366px;width:358px;height:1px;background:#efefef"></div><div style="position:absolute;left:1560px;top:386px;width:358px;height:1px;background:#efefef"></div><div style="position:absolute;left:1560px;top:406px;width:358px;height:1px;background:#efefef"></div><div style="position:absolute;left:1560px;top:426px;width:358px;height:1px;background:#efefef"></div><div style="position:absolute;left:1560px;top:446px;width:358px;height:1px;background:#efefef"></div><div style="position:absolute;left:1560px;top:466px;width:358px;height:1px;background:#efefef"></div><div style="position:absolute;left:1560px;top:486px;width:358px;height:1px;background:#efefef"></div><div style="position:absolute;left:1560px;top:506px;width:358px;height:1px;background:#efefef"></div><div style="position:absolute;left:1560px;top:526px;width:358px;height:1px;background:#efefef"></div><div style="position:absolute;left:1560px;top:546px;width:358px;height:1px;background:#efefef"></div><div style="position:absolute;left:1560px;top:566px;width:358px;height:1px;background:#efefef"></div><div style="position:absolute;left:1560px;top:586px;width:358px;height:1px;background:#efefef"></div><div style="position:absolute;left:1560px;top:606px;width:358px;height:1px;background:#efefef"></div><div style="position:absolute;left:1560px;top:626px;width:358px;height:1px;background:#efefef"></div><div style="position:absolute;left:1560px;top:646px;width:358px;height:1px;background:#efefef"></div><div style="position:absolute;left:1560px;top:666px;width:358px;height:1px;background:#efefef"></div><div style="position:absolute;left:1560px;top:686px;width:358px;height:1px;background:#efefef"></div><div style="position:absolute;left:1560px;top:706px;width:358px;height:1px;background:#efefef"></div><div style="position:absolute;left:1560px;top:726px;width:358px;height:1px;background:#efefef"></div><div style="position:absolute;left:1560px;top:746px;width:358px;height:1px;background:#efefef"></div><div style="position:absolute;left:1560px;top:766px;width:358px;height:1px;background:#efefef"></div><div style="position:absolute;left:1560px;top:786px;width:358px;height:1px;background:#efefef"></div><div style="position:absolute;left:1560px;top:806px;width:358px;height:1px;background:#efefef"></div><div style="position:absolute;left:1560px;top:826px;width:358px;height:1px;background:#efefef"></div><div style="position:absolute;left:1560px;top:846px;width:358px;height:1px;background:#efefef"></div><div style="position:absolute;left:1560px;top:866px;width:358px;height:1px;background:#efefef"></div><div style="position:absolute;left:1560px;top:886px;width:358px;height:1px;background:#efefef"></div><div style="position:absolute;left:1560px;top:906px;width:358px;height:1px;background:#efefef"></div><div style="position:absolute;left:1560px;top:926px;width:358px;height:1px;background:#efefef"></div><div style="position:absolute;left:1560px;top:946px;width:358px;height:1px;background:#efefef"></div><div style="position:absolute;left:1560px;top:966px;width:358px;height:1px;background:#efefef"></div><div style="position:absolute;left:1560px;top:986px;width:358px;height:1px;background:#efefef"></div><div style="position:absolute;left:1560px;top:1006px;width:358px;height:1px;background:#efefef"></div><div style="position:absolute;left:1560px;top:1026px;width:358px;height:1px;background:#efefef"></div><div style="position:absolute;left:1560px;top:1046px;width:358px;height:1px;background:#efefef"></div><div style="position:absolute;left:1560px;top:1066px;width:358px;height:1px;background:#efefef"></div><div style="position:absolute;left:1560px;top:1077px;width:358px;height:1px;background:#ffffff"></div><div style="position:absolute;left:0px;top:1078px;width:1920px;height:2px;background:#0c1017"></div><div style="position:absolute;left:1176px;top:1078px;width:200px;height:2px;background:#3a4048"></div>
<span class="t" style="left:-0.48px;top:3.30px;font-size:15px;line-height:15px;color:#9c9c9c;transform:scaleX(0.9841);">Results and Report -&gt; Sink Voltage (23 of 40 Failed)</span><span class="t" style="left:93.52px;top:37.00px;font-size:12px;line-height:12px;color:#000;font-weight:700;transform:scaleX(1.1800);">Sink Voltage</span><span class="t" style="left:8.75px;top:37.00px;font-size:12px;line-height:12px;color:#78716d;transform:scaleX(1.0357);">VRM Voltage</span><span class="t" style="left:188.44px;top:37.00px;font-size:12px;line-height:12px;color:#78716d;transform:scaleX(1.0640);">Discrete Current</span><span class="t" style="left:294.50px;top:37.00px;font-size:12px;line-height:12px;color:#78716d;transform:scaleX(1.0616);">Other Component Voltage</span><span class="t" style="left:452.93px;top:37.00px;font-size:12px;line-height:12px;color:#78716d;transform:scaleX(1.0672);">Probes Measurements</span><span class="t" style="left:592.55px;top:37.00px;font-size:12px;line-height:12px;color:#78716d;transform:scaleX(1.0510);">Global Via Current</span><span class="t" style="left:708.45px;top:37.00px;font-size:12px;line-height:12px;color:#78716d;transform:scaleX(1.0518);">Global Via Current Density</span><span class="t" style="left:869.43px;top:37.00px;font-size:12px;line-height:12px;color:#78716d;transform:scaleX(1.0667);">Specific Via Current</span><span class="t" style="left:994.26px;top:37.00px;font-size:12px;line-height:12px;color:#78716d;transform:scaleX(1.0419);">Global Plane Current Density</span><span class="t" style="left:1168.85px;top:37.00px;font-size:12px;line-height:12px;color:#78716d;transform:scaleX(1.0494);">Specific Plane Current Density</span><span class="t" style="left:1351.90px;top:37.00px;font-size:12px;line-height:12px;color:#78716d;transform:scaleX(1.0658);">Trace Current Density</span><span class="t" style="left:1489.70px;top:37.00px;font-size:12px;line-height:12px;color:#78716d;transform:scaleX(1.0587);">Wirebond Current Density</span><span class="t" style="left:1648.30px;top:37.00px;font-size:12px;line-height:12px;color:#78716d;transform:scaleX(1.0786);">Zero Current Via and Trace</span><span class="t" style="left:14.40px;top:65.00px;font-size:12px;line-height:12px;color:#101070;transform:scaleX(1.0846);">Tolerance</span><span class="t" style="left:104.50px;top:65.00px;font-size:12px;line-height:12px;color:#000;transform:scaleX(1.1300);">%</span><span class="t" style="left:7.45px;top:91.00px;font-size:12px;line-height:12px;color:#000;transform:scaleX(1.0526);">Sink Name</span><span class="t" style="left:107.42px;top:91.00px;font-size:12px;line-height:12px;color:#000;transform:scaleX(1.0774);">Model</span><span class="t" style="left:242.22px;top:91.00px;font-size:12px;line-height:12px;color:#000;transform:scaleX(1.0779);">Nominal Current</span><span class="t" style="left:319.80px;top:107.00px;font-size:12px;line-height:12px;color:#000;transform:scaleX(1.0800);">(A)</span><span class="t" style="left:362.04px;top:91.00px;font-size:12px;line-height:12px;color:#000;transform:scaleX(1.0800);">Nominal Voltage</span><span class="t" style="left:439.80px;top:107.00px;font-size:12px;line-height:12px;color:#000;transform:scaleX(1.0800);">(V)</span><span class="t" style="left:545.06px;top:91.00px;font-size:12px;line-height:12px;color:#000;transform:scaleX(1.0800);">Upper</span><span class="t" style="left:494.00px;top:107.00px;font-size:12px;line-height:12px;color:#000;transform:scaleX(1.1260);">Tolerance(+%)</span><span class="t" style="left:670.06px;top:91.00px;font-size:12px;line-height:12px;color:#000;transform:scaleX(1.0800);">Lower</span><span class="t" style="left:622.00px;top:107.00px;font-size:12px;line-height:12px;color:#000;transform:scaleX(1.1311);">Tolerance(-%)</span><span class="t" style="left:722.30px;top:91.00px;font-size:12px;line-height:12px;color:#000;transform:scaleX(1.0884);">Actual Voltage (V)</span><span class="t" style="left:862.09px;top:91.00px;font-size:12px;line-height:12px;color:#000;transform:scaleX(1.1148);">Margin (V)</span><span class="t" style="left:8.02px;top:132.00px;font-size:12px;line-height:12px;color:#000;font-weight:700;transform:scaleX(1.1800);">SINK_U13_...</span><span class="t" style="left:107.64px;top:132.00px;font-size:12px;line-height:12px;color:#000;transform:scaleX(1.0616);">Equal Current</span><span class="t" style="left:307.68px;top:132.00px;font-size:12px;line-height:12px;color:#000;font-weight:700;transform:scaleX(1.2400);">0.46</span><span class="t" style="left:438.22px;top:132.00px;font-size:12px;line-height:12px;color:#000;transform:scaleX(1.0800);">1.8</span><span class="t" style="left:573.76px;top:132.00px;font-size:12px;line-height:12px;color:#000;font-weight:700;transform:scaleX(1.2400);">2</span><span class="t" style="left:699.02px;top:132.00px;font-size:12px;line-height:12px;color:#000;transform:scaleX(1.0800);">2</span><span class="t" style="left:773.01px;top:132.00px;font-size:12px;line-height:12px;color:#000;font-weight:700;transform:scaleX(1.2300);">1.78891</span><span class="t" style="left:857.25px;top:132.00px;font-size:12px;line-height:12px;color:#008000;font-weight:700;transform:scaleX(1.2500);">0.00691...</span><span class="t" style="left:8.02px;top:152.00px;font-size:12px;line-height:12px;color:#000;font-weight:700;transform:scaleX(1.1800);">SINK_U12_...</span><span class="t" style="left:107.64px;top:152.00px;font-size:12px;line-height:12px;color:#000;transform:scaleX(1.0616);">Equal Current</span><span class="t" style="left:307.68px;top:152.00px;font-size:12px;line-height:12px;color:#000;font-weight:700;transform:scaleX(1.2400);">0.46</span><span class="t" style="left:438.22px;top:152.00px;font-size:12px;line-height:12px;color:#000;transform:scaleX(1.0800);">1.8</span><span class="t" style="left:573.76px;top:152.00px;font-size:12px;line-height:12px;color:#000;font-weight:700;transform:scaleX(1.2400);">3</span><span class="t" style="left:699.02px;top:152.00px;font-size:12px;line-height:12px;color:#000;transform:scaleX(1.0800);">3</span><span class="t" style="left:773.01px;top:152.00px;font-size:12px;line-height:12px;color:#000;font-weight:700;transform:scaleX(1.2300);">1.78866</span><span class="t" style="left:857.25px;top:152.00px;font-size:12px;line-height:12px;color:#008000;font-weight:700;transform:scaleX(1.2500);">0.02466...</span><span class="t" style="left:8.02px;top:172.00px;font-size:12px;line-height:12px;color:#000;font-weight:700;transform:scaleX(1.1800);">SINK_U51_...</span><span class="t" style="left:107.64px;top:172.00px;font-size:12px;line-height:12px;color:#000;transform:scaleX(1.0616);">Equal Current</span><span class="t" style="left:316.36px;top:172.00px;font-size:12px;line-height:12px;color:#000;font-weight:700;transform:scaleX(1.2400);">1.2</span><span class="t" style="left:438.22px;top:172.00px;font-size:12px;line-height:12px;color:#000;transform:scaleX(1.0800);">1.8</span><span class="t" style="left:573.76px;top:172.00px;font-size:12px;line-height:12px;color:#000;font-weight:700;transform:scaleX(1.2400);">3</span><span class="t" style="left:699.02px;top:172.00px;font-size:12px;line-height:12px;color:#000;transform:scaleX(1.0800);">3</span><span class="t" style="left:806.22px;top:172.00px;font-size:12px;line-height:12px;color:#000;font-weight:700;transform:scaleX(1.2300);">1.8</span><span class="t" style="left:886.00px;top:172.00px;font-size:12px;line-height:12px;color:#008000;font-weight:700;transform:scaleX(1.2500);">0.036</span><span class="t" style="left:8.02px;top:192.00px;font-size:12px;line-height:12px;color:#000;font-weight:700;transform:scaleX(1.1800);">SINK_U2_1...</span><span class="t" style="left:107.64px;top:192.00px;font-size:12px;line-height:12px;color:#000;transform:scaleX(1.0616);">Equal Current</span><span class="t" style="left:316.36px;top:192.00px;font-size:12px;line-height:12px;color:#000;font-weight:700;transform:scaleX(1.2400);">0.2</span><span class="t" style="left:438.22px;top:192.00px;font-size:12px;line-height:12px;color:#000;transform:scaleX(1.0800);">1.8</span><span class="t" style="left:573.76px;top:192.00px;font-size:12px;line-height:12px;color:#000;font-weight:700;transform:scaleX(1.2400);">3</span><span class="t" style="left:699.02px;top:192.00px;font-size:12px;line-height:12px;color:#000;transform:scaleX(1.0800);">3</span><span class="t" style="left:773.01px;top:192.00px;font-size:12px;line-height:12px;color:#000;font-weight:700;transform:scaleX(1.2300);">1.78849</span><span class="t" style="left:857.25px;top:192.00px;font-size:12px;line-height:12px;color:#008000;font-weight:700;transform:scaleX(1.2500);">0.02449...</span><span class="t" style="left:8.02px;top:212.00px;font-size:12px;line-height:12px;color:#000;font-weight:700;transform:scaleX(1.1800);">SINK_U1_1...</span><span class="t" style="left:107.64px;top:212.00px;font-size:12px;line-height:12px;color:#000;transform:scaleX(1.0616);">Equal Current</span><span class="t" style="left:328.76px;top:212.00px;font-size:12px;line-height:12px;color:#000;font-weight:700;transform:scaleX(1.2400);">2</span><span class="t" style="left:438.22px;top:212.00px;font-size:12px;line-height:12px;color:#000;transform:scaleX(1.0800);">1.2</span><span class="t" style="left:572.52px;top:212.00px;font-size:12px;line-height:12px;color:#000;font-weight:700;transform:scaleX(1.2400);">1</span><span class="t" style="left:699.02px;top:212.00px;font-size:12px;line-height:12px;color:#000;transform:scaleX(1.0800);">1</span><span class="t" style="left:773.01px;top:212.00px;font-size:12px;line-height:12px;color:#000;font-weight:700;transform:scaleX(1.2300);">1.18695</span><span class="t" style="left:861.00px;top:212.00px;font-size:12px;line-height:12px;color:#800000;font-weight:700;transform:scaleX(1.2500);">-0.0130...</span><span class="t" style="left:8.02px;top:232.00px;font-size:12px;line-height:12px;color:#000;font-weight:700;transform:scaleX(1.1800);">SINK_U2_1...</span><span class="t" style="left:107.64px;top:232.00px;font-size:12px;line-height:12px;color:#000;transform:scaleX(1.0616);">Equal Current</span><span class="t" style="left:328.76px;top:232.00px;font-size:12px;line-height:12px;color:#000;font-weight:700;transform:scaleX(1.2400);">2</span><span class="t" style="left:438.22px;top:232.00px;font-size:12px;line-height:12px;color:#000;transform:scaleX(1.0800);">1.2</span><span class="t" style="left:572.52px;top:232.00px;font-size:12px;line-height:12px;color:#000;font-weight:700;transform:scaleX(1.2400);">1</span><span class="t" style="left:699.02px;top:232.00px;font-size:12px;line-height:12px;color:#000;transform:scaleX(1.0800);">1</span><span class="t" style="left:773.01px;top:232.00px;font-size:12px;line-height:12px;color:#000;font-weight:700;transform:scaleX(1.2300);">1.18777</span><span class="t" style="left:861.00px;top:232.00px;font-size:12px;line-height:12px;color:#800000;font-weight:700;transform:scaleX(1.2500);">-0.0122...</span><span class="t" style="left:8.02px;top:252.00px;font-size:12px;line-height:12px;color:#000;font-weight:700;transform:scaleX(1.1800);">SINK_U11_...</span><span class="t" style="left:107.64px;top:252.00px;font-size:12px;line-height:12px;color:#000;transform:scaleX(1.0616);">Equal Current</span><span class="t" style="left:307.68px;top:252.00px;font-size:12px;line-height:12px;color:#000;font-weight:700;transform:scaleX(1.2400);">0.05</span><span class="t" style="left:438.22px;top:252.00px;font-size:12px;line-height:12px;color:#000;transform:scaleX(1.0800);">2.5</span><span class="t" style="left:573.76px;top:252.00px;font-size:12px;line-height:12px;color:#000;font-weight:700;transform:scaleX(1.2400);">3</span><span class="t" style="left:699.02px;top:252.00px;font-size:12px;line-height:12px;color:#000;transform:scaleX(1.0800);">3</span><span class="t" style="left:773.01px;top:252.00px;font-size:12px;line-height:12px;color:#000;font-weight:700;transform:scaleX(1.2300);">2.49749</span><span class="t" style="left:857.25px;top:252.00px;font-size:12px;line-height:12px;color:#008000;font-weight:700;transform:scaleX(1.2500);">0.04748...</span><span class="t" style="left:8.02px;top:272.00px;font-size:12px;line-height:12px;color:#000;font-weight:700;transform:scaleX(1.1800);">SINK_U10_...</span><span class="t" style="left:107.64px;top:272.00px;font-size:12px;line-height:12px;color:#000;transform:scaleX(1.0616);">Equal Current</span><span class="t" style="left:307.68px;top:272.00px;font-size:12px;line-height:12px;color:#000;font-weight:700;transform:scaleX(1.2400);">0.05</span><span class="t" style="left:438.22px;top:272.00px;font-size:12px;line-height:12px;color:#000;transform:scaleX(1.0800);">2.5</span><span class="t" style="left:573.76px;top:272.00px;font-size:12px;line-height:12px;color:#000;font-weight:700;transform:scaleX(1.2400);">3</span><span class="t" style="left:699.02px;top:272.00px;font-size:12px;line-height:12px;color:#000;transform:scaleX(1.0800);">3</span><span class="t" style="left:773.01px;top:272.00px;font-size:12px;line-height:12px;color:#000;font-weight:700;transform:scaleX(1.2300);">2.49792</span><span class="t" style="left:857.25px;top:272.00px;font-size:12px;line-height:12px;color:#008000;font-weight:700;transform:scaleX(1.2500);">0.04791...</span><span class="t" style="left:8.02px;top:292.00px;font-size:12px;line-height:12px;color:#000;font-weight:700;transform:scaleX(1.1800);">SINK_U1_2...</span><span class="t" style="left:107.64px;top:292.00px;font-size:12px;line-height:12px;color:#000;transform:scaleX(1.0616);">Equal Current</span><span class="t" style="left:307.68px;top:292.00px;font-size:12px;line-height:12px;color:#000;font-weight:700;transform:scaleX(1.2400);">0.25</span><span class="t" style="left:438.22px;top:292.00px;font-size:12px;line-height:12px;color:#000;transform:scaleX(1.0800);">2.5</span><span class="t" style="left:573.76px;top:292.00px;font-size:12px;line-height:12px;color:#000;font-weight:700;transform:scaleX(1.2400);">3</span><span class="t" style="left:699.02px;top:292.00px;font-size:12px;line-height:12px;color:#000;transform:scaleX(1.0800);">3</span><span class="t" style="left:773.01px;top:292.00px;font-size:12px;line-height:12px;color:#000;font-weight:700;transform:scaleX(1.2300);">2.49675</span><span class="t" style="left:857.25px;top:292.00px;font-size:12px;line-height:12px;color:#008000;font-weight:700;transform:scaleX(1.2500);">0.04675...</span><span class="t" style="left:8.02px;top:312.00px;font-size:12px;line-height:12px;color:#000;font-weight:700;transform:scaleX(1.1800);">SINK_U2_2...</span><span class="t" style="left:107.64px;top:312.00px;font-size:12px;line-height:12px;color:#000;transform:scaleX(1.0616);">Equal Current</span><span class="t" style="left:307.68px;top:312.00px;font-size:12px;line-height:12px;color:#000;font-weight:700;transform:scaleX(1.2400);">0.25</span><span class="t" style="left:438.22px;top:312.00px;font-size:12px;line-height:12px;color:#000;transform:scaleX(1.0800);">2.5</span><span class="t" style="left:573.76px;top:312.00px;font-size:12px;line-height:12px;color:#000;font-weight:700;transform:scaleX(1.2400);">3</span><span class="t" style="left:699.02px;top:312.00px;font-size:12px;line-height:12px;color:#000;transform:scaleX(1.0800);">3</span><span class="t" style="left:773.01px;top:312.00px;font-size:12px;line-height:12px;color:#000;font-weight:700;transform:scaleX(1.2300);">2.49679</span><span class="t" style="left:861.00px;top:312.00px;font-size:12px;line-height:12px;color:#008000;font-weight:700;transform:scaleX(1.2500);">0.046787</span><span class="t" style="left:8.02px;top:332.00px;font-size:12px;line-height:12px;color:#000;font-weight:700;transform:scaleX(1.1800);">SINK_U31_...</span><span class="t" style="left:107.64px;top:332.00px;font-size:12px;line-height:12px;color:#000;transform:scaleX(1.0616);">Equal Current</span><span class="t" style="left:307.68px;top:332.00px;font-size:12px;line-height:12px;color:#000;font-weight:700;transform:scaleX(1.2400);">0.05</span><span class="t" style="left:438.22px;top:332.00px;font-size:12px;line-height:12px;color:#000;transform:scaleX(1.0800);">3.3</span><span class="t" style="left:573.76px;top:332.00px;font-size:12px;line-height:12px;color:#000;font-weight:700;transform:scaleX(1.2400);">3</span><span class="t" style="left:699.02px;top:332.00px;font-size:12px;line-height:12px;color:#000;transform:scaleX(1.0800);">3</span><span class="t" style="left:806.22px;top:332.00px;font-size:12px;line-height:12px;color:#000;font-weight:700;transform:scaleX(1.2300);">3.3</span><span class="t" style="left:886.00px;top:332.00px;font-size:12px;line-height:12px;color:#008000;font-weight:700;transform:scaleX(1.2500);">0.066</span><span class="t" style="left:8.02px;top:352.00px;font-size:12px;line-height:12px;color:#000;font-weight:700;transform:scaleX(1.1800);">SINK_U30_...</span><span class="t" style="left:107.64px;top:352.00px;font-size:12px;line-height:12px;color:#000;transform:scaleX(1.0616);">Equal Current</span><span class="t" style="left:307.68px;top:352.00px;font-size:12px;line-height:12px;color:#000;font-weight:700;transform:scaleX(1.2400);">0.05</span><span class="t" style="left:438.22px;top:352.00px;font-size:12px;line-height:12px;color:#000;transform:scaleX(1.0800);">3.3</span><span class="t" style="left:573.76px;top:352.00px;font-size:12px;line-height:12px;color:#000;font-weight:700;transform:scaleX(1.2400);">3</span><span class="t" style="left:699.02px;top:352.00px;font-size:12px;line-height:12px;color:#000;transform:scaleX(1.0800);">3</span><span class="t" style="left:780.39px;top:352.00px;font-size:12px;line-height:12px;color:#000;font-weight:700;transform:scaleX(1.2300);">3.3001</span><span class="t" style="left:857.25px;top:352.00px;font-size:12px;line-height:12px;color:#008000;font-weight:700;transform:scaleX(1.2500);">0.06590...</span><span class="t" style="left:8.02px;top:372.00px;font-size:12px;line-height:12px;color:#000;font-weight:700;transform:scaleX(1.1800);">SINK_U29_...</span><span class="t" style="left:107.64px;top:372.00px;font-size:12px;line-height:12px;color:#000;transform:scaleX(1.0616);">Equal Current</span><span class="t" style="left:307.68px;top:372.00px;font-size:12px;line-height:12px;color:#000;font-weight:700;transform:scaleX(1.2400);">0.05</span><span class="t" style="left:438.22px;top:372.00px;font-size:12px;line-height:12px;color:#000;transform:scaleX(1.0800);">3.3</span><span class="t" style="left:573.76px;top:372.00px;font-size:12px;line-height:12px;color:#000;font-weight:700;transform:scaleX(1.2400);">3</span><span class="t" style="left:699.02px;top:372.00px;font-size:12px;line-height:12px;color:#000;transform:scaleX(1.0800);">3</span><span class="t" style="left:773.01px;top:372.00px;font-size:12px;line-height:12px;color:#000;font-weight:700;transform:scaleX(1.2300);">3.30082</span><span class="t" style="left:857.25px;top:372.00px;font-size:12px;line-height:12px;color:#008000;font-weight:700;transform:scaleX(1.2500);">0.06517...</span><span class="t" style="left:8.02px;top:392.00px;font-size:12px;line-height:12px;color:#000;font-weight:700;transform:scaleX(1.1800);">SINK_U11_...</span><span class="t" style="left:107.64px;top:392.00px;font-size:12px;line-height:12px;color:#000;transform:scaleX(1.0616);">Equal Current</span><span class="t" style="left:307.68px;top:392.00px;font-size:12px;line-height:12px;color:#000;font-weight:700;transform:scaleX(1.2400);">0.02</span><span class="t" style="left:438.22px;top:392.00px;font-size:12px;line-height:12px;color:#000;transform:scaleX(1.0800);">3.3</span><span class="t" style="left:573.76px;top:392.00px;font-size:12px;line-height:12px;color:#000;font-weight:700;transform:scaleX(1.2400);">3</span><span class="t" style="left:699.02px;top:392.00px;font-size:12px;line-height:12px;color:#000;transform:scaleX(1.0800);">3</span><span class="t" style="left:773.01px;top:392.00px;font-size:12px;line-height:12px;color:#000;font-weight:700;transform:scaleX(1.2300);">3.29942</span><span class="t" style="left:857.25px;top:392.00px;font-size:12px;line-height:12px;color:#008000;font-weight:700;transform:scaleX(1.2500);">0.06541...</span><span class="t" style="left:8.02px;top:412.00px;font-size:12px;line-height:12px;color:#000;font-weight:700;transform:scaleX(1.1800);">SINK_U10_...</span><span class="t" style="left:107.64px;top:412.00px;font-size:12px;line-height:12px;color:#000;transform:scaleX(1.0616);">Equal Current</span><span class="t" style="left:307.68px;top:412.00px;font-size:12px;line-height:12px;color:#000;font-weight:700;transform:scaleX(1.2400);">0.02</span><span class="t" style="left:438.22px;top:412.00px;font-size:12px;line-height:12px;color:#000;transform:scaleX(1.0800);">3.3</span><span class="t" style="left:573.76px;top:412.00px;font-size:12px;line-height:12px;color:#000;font-weight:700;transform:scaleX(1.2400);">3</span><span class="t" style="left:699.02px;top:412.00px;font-size:12px;line-height:12px;color:#000;transform:scaleX(1.0800);">3</span><span class="t" style="left:773.01px;top:412.00px;font-size:12px;line-height:12px;color:#000;font-weight:700;transform:scaleX(1.2300);">3.29913</span><span class="t" style="left:861.00px;top:412.00px;font-size:12px;line-height:12px;color:#008000;font-weight:700;transform:scaleX(1.2500);">0.065129</span><span class="t" style="left:8.02px;top:432.00px;font-size:12px;line-height:12px;color:#000;font-weight:700;transform:scaleX(1.1800);">SINK_U51_...</span><span class="t" style="left:107.64px;top:432.00px;font-size:12px;line-height:12px;color:#000;transform:scaleX(1.0616);">Equal Current</span><span class="t" style="left:307.68px;top:432.00px;font-size:12px;line-height:12px;color:#000;font-weight:700;transform:scaleX(1.2400);">0.01</span><span class="t" style="left:438.22px;top:432.00px;font-size:12px;line-height:12px;color:#000;transform:scaleX(1.0800);">3.3</span><span class="t" style="left:573.76px;top:432.00px;font-size:12px;line-height:12px;color:#000;font-weight:700;transform:scaleX(1.2400);">3</span><span class="t" style="left:699.02px;top:432.00px;font-size:12px;line-height:12px;color:#000;transform:scaleX(1.0800);">3</span><span class="t" style="left:773.01px;top:432.00px;font-size:12px;line-height:12px;color:#000;font-weight:700;transform:scaleX(1.2300);">3.30309</span><span class="t" style="left:857.25px;top:432.00px;font-size:12px;line-height:12px;color:#008000;font-weight:700;transform:scaleX(1.2500);">0.06291...</span><span class="t" style="left:8.02px;top:452.00px;font-size:12px;line-height:12px;color:#000;font-weight:700;transform:scaleX(1.1800);">SINK_U1_3...</span><span class="t" style="left:107.64px;top:452.00px;font-size:12px;line-height:12px;color:#000;transform:scaleX(1.0616);">Equal Current</span><span class="t" style="left:307.68px;top:452.00px;font-size:12px;line-height:12px;color:#000;font-weight:700;transform:scaleX(1.2400);">0.03</span><span class="t" style="left:438.22px;top:452.00px;font-size:12px;line-height:12px;color:#000;transform:scaleX(1.0800);">3.3</span><span class="t" style="left:573.76px;top:452.00px;font-size:12px;line-height:12px;color:#000;font-weight:700;transform:scaleX(1.2400);">3</span><span class="t" style="left:699.02px;top:452.00px;font-size:12px;line-height:12px;color:#000;transform:scaleX(1.0800);">3</span><span class="t" style="left:773.01px;top:452.00px;font-size:12px;line-height:12px;color:#000;font-weight:700;transform:scaleX(1.2300);">3.29849</span><span class="t" style="left:857.25px;top:452.00px;font-size:12px;line-height:12px;color:#008000;font-weight:700;transform:scaleX(1.2500);">0.06448...</span><span class="t" style="left:8.02px;top:472.00px;font-size:12px;line-height:12px;color:#000;font-weight:700;transform:scaleX(1.1800);">SINK_U2_3...</span><span class="t" style="left:107.64px;top:472.00px;font-size:12px;line-height:12px;color:#000;transform:scaleX(1.0616);">Equal Current</span><span class="t" style="left:307.68px;top:472.00px;font-size:12px;line-height:12px;color:#000;font-weight:700;transform:scaleX(1.2400);">0.03</span><span class="t" style="left:438.22px;top:472.00px;font-size:12px;line-height:12px;color:#000;transform:scaleX(1.0800);">3.3</span><span class="t" style="left:573.76px;top:472.00px;font-size:12px;line-height:12px;color:#000;font-weight:700;transform:scaleX(1.2400);">3</span><span class="t" style="left:699.02px;top:472.00px;font-size:12px;line-height:12px;color:#000;transform:scaleX(1.0800);">3</span><span class="t" style="left:773.01px;top:472.00px;font-size:12px;line-height:12px;color:#000;font-weight:700;transform:scaleX(1.2300);">3.29858</span><span class="t" style="left:857.25px;top:472.00px;font-size:12px;line-height:12px;color:#008000;font-weight:700;transform:scaleX(1.2500);">0.06458...</span><span class="t" style="left:8.02px;top:492.00px;font-size:12px;line-height:12px;color:#000;font-weight:700;transform:scaleX(1.1800);">SINK_U4_5...</span><span class="t" style="left:107.64px;top:492.00px;font-size:12px;line-height:12px;color:#000;transform:scaleX(1.0616);">Equal Current</span><span class="t" style="left:306.44px;top:492.00px;font-size:12px;line-height:12px;color:#000;font-weight:700;transform:scaleX(1.2400);">0.04</span><span class="t" style="left:449.02px;top:492.00px;font-size:12px;line-height:12px;color:#000;transform:scaleX(1.0800);">5</span><span class="t" style="left:573.76px;top:492.00px;font-size:12px;line-height:12px;color:#000;font-weight:700;transform:scaleX(1.2400);">3</span><span class="t" style="left:699.02px;top:492.00px;font-size:12px;line-height:12px;color:#000;transform:scaleX(1.0800);">3</span><span class="t" style="left:773.01px;top:492.00px;font-size:12px;line-height:12px;color:#000;font-weight:700;transform:scaleX(1.2300);">4.99631</span><span class="t" style="left:857.25px;top:492.00px;font-size:12px;line-height:12px;color:#008000;font-weight:700;transform:scaleX(1.2500);">0.09630...</span><span class="t" style="left:8.02px;top:512.00px;font-size:12px;line-height:12px;color:#000;font-weight:700;transform:scaleX(1.1800);">SINK_U7_V...</span><span class="t" style="left:107.64px;top:512.00px;font-size:12px;line-height:12px;color:#000;transform:scaleX(1.0616);">Equal Current</span><span class="t" style="left:307.68px;top:512.00px;font-size:12px;line-height:12px;color:#000;font-weight:700;transform:scaleX(1.2400);">0.02</span><span class="t" style="left:449.02px;top:512.00px;font-size:12px;line-height:12px;color:#000;transform:scaleX(1.0800);">5</span><span class="t" style="left:573.76px;top:512.00px;font-size:12px;line-height:12px;color:#000;font-weight:700;transform:scaleX(1.2400);">3</span><span class="t" style="left:699.02px;top:512.00px;font-size:12px;line-height:12px;color:#000;transform:scaleX(1.0800);">3</span><span class="t" style="left:773.01px;top:512.00px;font-size:12px;line-height:12px;color:#000;font-weight:700;transform:scaleX(1.2300);">4.99796</span><span class="t" style="left:856.00px;top:512.00px;font-size:12px;line-height:12px;color:#800000;font-weight:700;transform:scaleX(1.2500);">-0.102036</span><span class="t" style="left:8.02px;top:532.00px;font-size:12px;line-height:12px;color:#000;font-weight:700;transform:scaleX(1.1800);">SINK_U48_...</span><span class="t" style="left:107.64px;top:532.00px;font-size:12px;line-height:12px;color:#000;transform:scaleX(1.0616);">Equal Current</span><span class="t" style="left:307.68px;top:532.00px;font-size:12px;line-height:12px;color:#000;font-weight:700;transform:scaleX(1.2400);">0.02</span><span class="t" style="left:449.02px;top:532.00px;font-size:12px;line-height:12px;color:#000;transform:scaleX(1.0800);">5</span><span class="t" style="left:573.76px;top:532.00px;font-size:12px;line-height:12px;color:#000;font-weight:700;transform:scaleX(1.2400);">3</span><span class="t" style="left:699.02px;top:532.00px;font-size:12px;line-height:12px;color:#000;transform:scaleX(1.0800);">3</span><span class="t" style="left:773.01px;top:532.00px;font-size:12px;line-height:12px;color:#000;font-weight:700;transform:scaleX(1.2300);">4.99745</span><span class="t" style="left:856.00px;top:532.00px;font-size:12px;line-height:12px;color:#800000;font-weight:700;transform:scaleX(1.2500);">-0.102548</span><span class="t" style="left:8.02px;top:552.00px;font-size:12px;line-height:12px;color:#000;font-weight:700;transform:scaleX(1.1800);">SINK_U35_...</span><span class="t" style="left:107.64px;top:552.00px;font-size:12px;line-height:12px;color:#000;transform:scaleX(1.0616);">Equal Current</span><span class="t" style="left:307.68px;top:552.00px;font-size:12px;line-height:12px;color:#000;font-weight:700;transform:scaleX(1.2400);">0.06</span><span class="t" style="left:449.02px;top:552.00px;font-size:12px;line-height:12px;color:#000;transform:scaleX(1.0800);">5</span><span class="t" style="left:573.76px;top:552.00px;font-size:12px;line-height:12px;color:#000;font-weight:700;transform:scaleX(1.2400);">3</span><span class="t" style="left:699.02px;top:552.00px;font-size:12px;line-height:12px;color:#000;transform:scaleX(1.0800);">3</span><span class="t" style="left:773.01px;top:552.00px;font-size:12px;line-height:12px;color:#000;font-weight:700;transform:scaleX(1.2300);">4.99606</span><span class="t" style="left:856.00px;top:552.00px;font-size:12px;line-height:12px;color:#800000;font-weight:700;transform:scaleX(1.2500);">-0.103945</span><span class="t" style="left:8.02px;top:572.00px;font-size:12px;line-height:12px;color:#000;font-weight:700;transform:scaleX(1.1800);">SINK_U32_...</span><span class="t" style="left:107.64px;top:572.00px;font-size:12px;line-height:12px;color:#000;transform:scaleX(1.0616);">Equal Current</span><span class="t" style="left:307.68px;top:572.00px;font-size:12px;line-height:12px;color:#000;font-weight:700;transform:scaleX(1.2400);">0.06</span><span class="t" style="left:449.02px;top:572.00px;font-size:12px;line-height:12px;color:#000;transform:scaleX(1.0800);">5</span><span class="t" style="left:573.76px;top:572.00px;font-size:12px;line-height:12px;color:#000;font-weight:700;transform:scaleX(1.2400);">3</span><span class="t" style="left:699.02px;top:572.00px;font-size:12px;line-height:12px;color:#000;transform:scaleX(1.0800);">3</span><span class="t" style="left:773.01px;top:572.00px;font-size:12px;line-height:12px;color:#000;font-weight:700;transform:scaleX(1.2300);">4.99583</span><span class="t" style="left:856.00px;top:572.00px;font-size:12px;line-height:12px;color:#800000;font-weight:700;transform:scaleX(1.2500);">-0.104169</span><span class="t" style="left:8.02px;top:592.00px;font-size:12px;line-height:12px;color:#000;font-weight:700;transform:scaleX(1.1800);">SINK_U39_...</span><span class="t" style="left:107.64px;top:592.00px;font-size:12px;line-height:12px;color:#000;transform:scaleX(1.0616);">Equal Current</span><span class="t" style="left:299.00px;top:592.00px;font-size:12px;line-height:12px;color:#000;font-weight:700;transform:scaleX(1.2400);">0.025</span><span class="t" style="left:449.02px;top:592.00px;font-size:12px;line-height:12px;color:#000;transform:scaleX(1.0800);">5</span><span class="t" style="left:573.76px;top:592.00px;font-size:12px;line-height:12px;color:#000;font-weight:700;transform:scaleX(1.2400);">3</span><span class="t" style="left:699.02px;top:592.00px;font-size:12px;line-height:12px;color:#000;transform:scaleX(1.0800);">3</span><span class="t" style="left:771.78px;top:592.00px;font-size:12px;line-height:12px;color:#000;font-weight:700;transform:scaleX(1.2300);">4.99604</span><span class="t" style="left:856.00px;top:592.00px;font-size:12px;line-height:12px;color:#800000;font-weight:700;transform:scaleX(1.2500);">-0.103958</span><span class="t" style="left:8.02px;top:612.00px;font-size:12px;line-height:12px;color:#000;font-weight:700;transform:scaleX(1.1800);">SINK_U38_...</span><span class="t" style="left:107.64px;top:612.00px;font-size:12px;line-height:12px;color:#000;transform:scaleX(1.0616);">Equal Current</span><span class="t" style="left:299.00px;top:612.00px;font-size:12px;line-height:12px;color:#000;font-weight:700;transform:scaleX(1.2400);">0.025</span><span class="t" style="left:449.02px;top:612.00px;font-size:12px;line-height:12px;color:#000;transform:scaleX(1.0800);">5</span><span class="t" style="left:573.76px;top:612.00px;font-size:12px;line-height:12px;color:#000;font-weight:700;transform:scaleX(1.2400);">3</span><span class="t" style="left:699.02px;top:612.00px;font-size:12px;line-height:12px;color:#000;transform:scaleX(1.0800);">3</span><span class="t" style="left:771.78px;top:612.00px;font-size:12px;line-height:12px;color:#000;font-weight:700;transform:scaleX(1.2300);">4.99614</span><span class="t" style="left:856.00px;top:612.00px;font-size:12px;line-height:12px;color:#800000;font-weight:700;transform:scaleX(1.2500);">-0.103857</span><span class="t" style="left:8.02px;top:632.00px;font-size:12px;line-height:12px;color:#000;font-weight:700;transform:scaleX(1.1800);">SINK_U22_...</span><span class="t" style="left:107.64px;top:632.00px;font-size:12px;line-height:12px;color:#000;transform:scaleX(1.0616);">Equal Current</span><span class="t" style="left:299.00px;top:632.00px;font-size:12px;line-height:12px;color:#000;font-weight:700;transform:scaleX(1.2400);">0.025</span><span class="t" style="left:449.02px;top:632.00px;font-size:12px;line-height:12px;color:#000;transform:scaleX(1.0800);">5</span><span class="t" style="left:573.76px;top:632.00px;font-size:12px;line-height:12px;color:#000;font-weight:700;transform:scaleX(1.2400);">3</span><span class="t" style="left:699.02px;top:632.00px;font-size:12px;line-height:12px;color:#000;transform:scaleX(1.0800);">3</span><span class="t" style="left:773.01px;top:632.00px;font-size:12px;line-height:12px;color:#000;font-weight:700;transform:scaleX(1.2300);">4.99605</span><span class="t" style="left:856.00px;top:632.00px;font-size:12px;line-height:12px;color:#800000;font-weight:700;transform:scaleX(1.2500);">-0.103949</span><span class="t" style="left:8.02px;top:652.00px;font-size:12px;line-height:12px;color:#000;font-weight:700;transform:scaleX(1.1800);">SINK_J5_V...</span><span class="t" style="left:107.64px;top:652.00px;font-size:12px;line-height:12px;color:#000;transform:scaleX(1.0616);">Equal Current</span><span class="t" style="left:327.52px;top:652.00px;font-size:12px;line-height:12px;color:#000;font-weight:700;transform:scaleX(1.2400);">1</span><span class="t" style="left:449.02px;top:652.00px;font-size:12px;line-height:12px;color:#000;transform:scaleX(1.0800);">5</span><span class="t" style="left:573.76px;top:652.00px;font-size:12px;line-height:12px;color:#000;font-weight:700;transform:scaleX(1.2400);">3</span><span class="t" style="left:699.02px;top:652.00px;font-size:12px;line-height:12px;color:#000;transform:scaleX(1.0800);">3</span><span class="t" style="left:781.62px;top:652.00px;font-size:12px;line-height:12px;color:#000;font-weight:700;transform:scaleX(1.2300);">4.9948</span><span class="t" style="left:856.00px;top:652.00px;font-size:12px;line-height:12px;color:#800000;font-weight:700;transform:scaleX(1.2500);">-0.105197</span><span class="t" style="left:8.02px;top:672.00px;font-size:12px;line-height:12px;color:#000;font-weight:700;transform:scaleX(1.1800);">SINK_U9_V...</span><span class="t" style="left:107.64px;top:672.00px;font-size:12px;line-height:12px;color:#000;transform:scaleX(1.0616);">Equal Current</span><span class="t" style="left:299.00px;top:672.00px;font-size:12px;line-height:12px;color:#000;font-weight:700;transform:scaleX(1.2400);">0.064</span><span class="t" style="left:449.02px;top:672.00px;font-size:12px;line-height:12px;color:#000;transform:scaleX(1.0800);">5</span><span class="t" style="left:573.76px;top:672.00px;font-size:12px;line-height:12px;color:#000;font-weight:700;transform:scaleX(1.2400);">3</span><span class="t" style="left:699.02px;top:672.00px;font-size:12px;line-height:12px;color:#000;transform:scaleX(1.0800);">3</span><span class="t" style="left:771.78px;top:672.00px;font-size:12px;line-height:12px;color:#000;font-weight:700;transform:scaleX(1.2300);">4.99784</span><span class="t" style="left:856.00px;top:672.00px;font-size:12px;line-height:12px;color:#800000;font-weight:700;transform:scaleX(1.2500);">-0.102165</span><span class="t" style="left:8.02px;top:692.00px;font-size:12px;line-height:12px;color:#000;font-weight:700;transform:scaleX(1.1800);">SINK_U8_V...</span><span class="t" style="left:107.64px;top:692.00px;font-size:12px;line-height:12px;color:#000;transform:scaleX(1.0616);">Equal Current</span><span class="t" style="left:299.00px;top:692.00px;font-size:12px;line-height:12px;color:#000;font-weight:700;transform:scaleX(1.2400);">0.064</span><span class="t" style="left:449.02px;top:692.00px;font-size:12px;line-height:12px;color:#000;transform:scaleX(1.0800);">5</span><span class="t" style="left:573.76px;top:692.00px;font-size:12px;line-height:12px;color:#000;font-weight:700;transform:scaleX(1.2400);">3</span><span class="t" style="left:699.02px;top:692.00px;font-size:12px;line-height:12px;color:#000;transform:scaleX(1.0800);">3</span><span class="t" style="left:773.01px;top:692.00px;font-size:12px;line-height:12px;color:#000;font-weight:700;transform:scaleX(1.2300);">4.99798</span><span class="t" style="left:856.00px;top:692.00px;font-size:12px;line-height:12px;color:#800000;font-weight:700;transform:scaleX(1.2500);">-0.102024</span><span class="t" style="left:8.02px;top:712.00px;font-size:12px;line-height:12px;color:#000;font-weight:700;transform:scaleX(1.1800);">SINK_U6_V...</span><span class="t" style="left:107.64px;top:712.00px;font-size:12px;line-height:12px;color:#000;transform:scaleX(1.0616);">Equal Current</span><span class="t" style="left:299.00px;top:712.00px;font-size:12px;line-height:12px;color:#000;font-weight:700;transform:scaleX(1.2400);">0.064</span><span class="t" style="left:449.02px;top:712.00px;font-size:12px;line-height:12px;color:#000;transform:scaleX(1.0800);">5</span><span class="t" style="left:573.76px;top:712.00px;font-size:12px;line-height:12px;color:#000;font-weight:700;transform:scaleX(1.2400);">3</span><span class="t" style="left:699.02px;top:712.00px;font-size:12px;line-height:12px;color:#000;transform:scaleX(1.0800);">3</span><span class="t" style="left:773.01px;top:712.00px;font-size:12px;line-height:12px;color:#000;font-weight:700;transform:scaleX(1.2300);">4.99795</span><span class="t" style="left:856.00px;top:712.00px;font-size:12px;line-height:12px;color:#800000;font-weight:700;transform:scaleX(1.2500);">-0.102051</span><span class="t" style="left:8.02px;top:732.00px;font-size:12px;line-height:12px;color:#000;font-weight:700;transform:scaleX(1.1800);">SINK_U47_...</span><span class="t" style="left:107.64px;top:732.00px;font-size:12px;line-height:12px;color:#000;transform:scaleX(1.0616);">Equal Current</span><span class="t" style="left:307.68px;top:732.00px;font-size:12px;line-height:12px;color:#000;font-weight:700;transform:scaleX(1.2400);">0.22</span><span class="t" style="left:449.02px;top:732.00px;font-size:12px;line-height:12px;color:#000;transform:scaleX(1.0800);">5</span><span class="t" style="left:573.76px;top:732.00px;font-size:12px;line-height:12px;color:#000;font-weight:700;transform:scaleX(1.2400);">3</span><span class="t" style="left:699.02px;top:732.00px;font-size:12px;line-height:12px;color:#000;transform:scaleX(1.0800);">3</span><span class="t" style="left:781.62px;top:732.00px;font-size:12px;line-height:12px;color:#000;font-weight:700;transform:scaleX(1.2300);">4.9946</span><span class="t" style="left:856.00px;top:732.00px;font-size:12px;line-height:12px;color:#800000;font-weight:700;transform:scaleX(1.2500);">-0.105401</span><span class="t" style="left:8.02px;top:752.00px;font-size:12px;line-height:12px;color:#000;font-weight:700;transform:scaleX(1.1800);">SINK_U46_...</span><span class="t" style="left:107.64px;top:752.00px;font-size:12px;line-height:12px;color:#000;transform:scaleX(1.0616);">Equal Current</span><span class="t" style="left:307.68px;top:752.00px;font-size:12px;line-height:12px;color:#000;font-weight:700;transform:scaleX(1.2400);">0.22</span><span class="t" style="left:449.02px;top:752.00px;font-size:12px;line-height:12px;color:#000;transform:scaleX(1.0800);">5</span><span class="t" style="left:573.76px;top:752.00px;font-size:12px;line-height:12px;color:#000;font-weight:700;transform:scaleX(1.2400);">3</span><span class="t" style="left:699.02px;top:752.00px;font-size:12px;line-height:12px;color:#000;transform:scaleX(1.0800);">3</span><span class="t" style="left:781.62px;top:752.00px;font-size:12px;line-height:12px;color:#000;font-weight:700;transform:scaleX(1.2300);">4.9946</span><span class="t" style="left:856.00px;top:752.00px;font-size:12px;line-height:12px;color:#800000;font-weight:700;transform:scaleX(1.2500);">-0.105401</span><span class="t" style="left:8.02px;top:772.00px;font-size:12px;line-height:12px;color:#000;font-weight:700;transform:scaleX(1.1800);">SINK_U45_...</span><span class="t" style="left:107.64px;top:772.00px;font-size:12px;line-height:12px;color:#000;transform:scaleX(1.0616);">Equal Current</span><span class="t" style="left:307.68px;top:772.00px;font-size:12px;line-height:12px;color:#000;font-weight:700;transform:scaleX(1.2400);">0.22</span><span class="t" style="left:449.02px;top:772.00px;font-size:12px;line-height:12px;color:#000;transform:scaleX(1.0800);">5</span><span class="t" style="left:573.76px;top:772.00px;font-size:12px;line-height:12px;color:#000;font-weight:700;transform:scaleX(1.2400);">3</span><span class="t" style="left:699.02px;top:772.00px;font-size:12px;line-height:12px;color:#000;transform:scaleX(1.0800);">3</span><span class="t" style="left:773.01px;top:772.00px;font-size:12px;line-height:12px;color:#000;font-weight:700;transform:scaleX(1.2300);">4.99463</span><span class="t" style="left:864.75px;top:772.00px;font-size:12px;line-height:12px;color:#800000;font-weight:700;transform:scaleX(1.2500);">-0.10537</span><span class="t" style="left:8.02px;top:792.00px;font-size:12px;line-height:12px;color:#fff;font-weight:700;transform:scaleX(1.1800);">SINK_U44_...</span><span class="t" style="left:107.64px;top:792.00px;font-size:12px;line-height:12px;color:#fff;transform:scaleX(1.0616);">Equal Current</span><span class="t" style="left:307.68px;top:792.00px;font-size:12px;line-height:12px;color:#fff;font-weight:700;transform:scaleX(1.2400);">0.22</span><span class="t" style="left:449.02px;top:792.00px;font-size:12px;line-height:12px;color:#fff;transform:scaleX(1.0800);">5</span><span class="t" style="left:573.76px;top:792.00px;font-size:12px;line-height:12px;color:#fff;font-weight:700;transform:scaleX(1.2400);">3</span><span class="t" style="left:699.02px;top:792.00px;font-size:12px;line-height:12px;color:#fff;transform:scaleX(1.0800);">3</span><span class="t" style="left:773.01px;top:792.00px;font-size:12px;line-height:12px;color:#fff;font-weight:700;transform:scaleX(1.2300);">4.99483</span><span class="t" style="left:856.00px;top:792.00px;font-size:12px;line-height:12px;color:#fff;font-weight:700;transform:scaleX(1.2500);">-0.105169</span><span class="t" style="left:8.02px;top:812.00px;font-size:12px;line-height:12px;color:#000;font-weight:700;transform:scaleX(1.1800);">SINK_U43_...</span><span class="t" style="left:107.64px;top:812.00px;font-size:12px;line-height:12px;color:#000;transform:scaleX(1.0616);">Equal Current</span><span class="t" style="left:307.68px;top:812.00px;font-size:12px;line-height:12px;color:#000;font-weight:700;transform:scaleX(1.2400);">0.22</span><span class="t" style="left:449.02px;top:812.00px;font-size:12px;line-height:12px;color:#000;transform:scaleX(1.0800);">5</span><span class="t" style="left:573.76px;top:812.00px;font-size:12px;line-height:12px;color:#000;font-weight:700;transform:scaleX(1.2400);">3</span><span class="t" style="left:699.02px;top:812.00px;font-size:12px;line-height:12px;color:#000;transform:scaleX(1.0800);">3</span><span class="t" style="left:773.01px;top:812.00px;font-size:12px;line-height:12px;color:#000;font-weight:700;transform:scaleX(1.2300);">4.99506</span><span class="t" style="left:856.00px;top:812.00px;font-size:12px;line-height:12px;color:#800000;font-weight:700;transform:scaleX(1.2500);">-0.104936</span><span class="t" style="left:8.02px;top:832.00px;font-size:12px;line-height:12px;color:#000;font-weight:700;transform:scaleX(1.1800);">SINK_U42_...</span><span class="t" style="left:107.64px;top:832.00px;font-size:12px;line-height:12px;color:#000;transform:scaleX(1.0616);">Equal Current</span><span class="t" style="left:307.68px;top:832.00px;font-size:12px;line-height:12px;color:#000;font-weight:700;transform:scaleX(1.2400);">0.22</span><span class="t" style="left:449.02px;top:832.00px;font-size:12px;line-height:12px;color:#000;transform:scaleX(1.0800);">5</span><span class="t" style="left:573.76px;top:832.00px;font-size:12px;line-height:12px;color:#000;font-weight:700;transform:scaleX(1.2400);">3</span><span class="t" style="left:699.02px;top:832.00px;font-size:12px;line-height:12px;color:#000;transform:scaleX(1.0800);">3</span><span class="t" style="left:773.01px;top:832.00px;font-size:12px;line-height:12px;color:#000;font-weight:700;transform:scaleX(1.2300);">4.99539</span><span class="t" style="left:864.75px;top:832.00px;font-size:12px;line-height:12px;color:#800000;font-weight:700;transform:scaleX(1.2500);">-0.10461</span><span class="t" style="left:8.02px;top:852.00px;font-size:12px;line-height:12px;color:#000;font-weight:700;transform:scaleX(1.1800);">SINK_U41_...</span><span class="t" style="left:107.64px;top:852.00px;font-size:12px;line-height:12px;color:#000;transform:scaleX(1.0616);">Equal Current</span><span class="t" style="left:307.68px;top:852.00px;font-size:12px;line-height:12px;color:#000;font-weight:700;transform:scaleX(1.2400);">0.22</span><span class="t" style="left:449.02px;top:852.00px;font-size:12px;line-height:12px;color:#000;transform:scaleX(1.0800);">5</span><span class="t" style="left:573.76px;top:852.00px;font-size:12px;line-height:12px;color:#000;font-weight:700;transform:scaleX(1.2400);">3</span><span class="t" style="left:699.02px;top:852.00px;font-size:12px;line-height:12px;color:#000;transform:scaleX(1.0800);">3</span><span class="t" style="left:773.01px;top:852.00px;font-size:12px;line-height:12px;color:#000;font-weight:700;transform:scaleX(1.2300);">4.99581</span><span class="t" style="left:856.00px;top:852.00px;font-size:12px;line-height:12px;color:#800000;font-weight:700;transform:scaleX(1.2500);">-0.104186</span><span class="t" style="left:8.02px;top:872.00px;font-size:12px;line-height:12px;color:#000;font-weight:700;transform:scaleX(1.1800);">SINK_U40_...</span><span class="t" style="left:107.64px;top:872.00px;font-size:12px;line-height:12px;color:#000;transform:scaleX(1.0616);">Equal Current</span><span class="t" style="left:307.68px;top:872.00px;font-size:12px;line-height:12px;color:#000;font-weight:700;transform:scaleX(1.2400);">0.22</span><span class="t" style="left:449.02px;top:872.00px;font-size:12px;line-height:12px;color:#000;transform:scaleX(1.0800);">5</span><span class="t" style="left:573.76px;top:872.00px;font-size:12px;line-height:12px;color:#000;font-weight:700;transform:scaleX(1.2400);">3</span><span class="t" style="left:699.02px;top:872.00px;font-size:12px;line-height:12px;color:#000;transform:scaleX(1.0800);">3</span><span class="t" style="left:773.01px;top:872.00px;font-size:12px;line-height:12px;color:#000;font-weight:700;transform:scaleX(1.2300);">4.99636</span><span class="t" style="left:856.00px;top:872.00px;font-size:12px;line-height:12px;color:#800000;font-weight:700;transform:scaleX(1.2500);">-0.103642</span><span class="t" style="left:8.02px;top:892.00px;font-size:12px;line-height:12px;color:#000;font-weight:700;transform:scaleX(1.1800);">SINK_U50_...</span><span class="t" style="left:107.64px;top:892.00px;font-size:12px;line-height:12px;color:#000;transform:scaleX(1.0616);">Equal Current</span><span class="t" style="left:299.00px;top:892.00px;font-size:12px;line-height:12px;color:#000;font-weight:700;transform:scaleX(1.2400);">0.055</span><span class="t" style="left:449.02px;top:892.00px;font-size:12px;line-height:12px;color:#000;transform:scaleX(1.0800);">5</span><span class="t" style="left:573.76px;top:892.00px;font-size:12px;line-height:12px;color:#000;font-weight:700;transform:scaleX(1.2400);">3</span><span class="t" style="left:699.02px;top:892.00px;font-size:12px;line-height:12px;color:#000;transform:scaleX(1.0800);">3</span><span class="t" style="left:771.78px;top:892.00px;font-size:12px;line-height:12px;color:#000;font-weight:700;transform:scaleX(1.2300);">4.99574</span><span class="t" style="left:856.00px;top:892.00px;font-size:12px;line-height:12px;color:#800000;font-weight:700;transform:scaleX(1.2500);">-0.104264</span><span class="t" style="left:8.02px;top:912.00px;font-size:12px;line-height:12px;color:#000;font-weight:700;transform:scaleX(1.1800);">SINK_U49_...</span><span class="t" style="left:107.64px;top:912.00px;font-size:12px;line-height:12px;color:#000;transform:scaleX(1.0616);">Equal Current</span><span class="t" style="left:307.68px;top:912.00px;font-size:12px;line-height:12px;color:#000;font-weight:700;transform:scaleX(1.2400);">0.03</span><span class="t" style="left:449.02px;top:912.00px;font-size:12px;line-height:12px;color:#000;transform:scaleX(1.0800);">5</span><span class="t" style="left:573.76px;top:912.00px;font-size:12px;line-height:12px;color:#000;font-weight:700;transform:scaleX(1.2400);">3</span><span class="t" style="left:699.02px;top:912.00px;font-size:12px;line-height:12px;color:#000;transform:scaleX(1.0800);">3</span><span class="t" style="left:773.01px;top:912.00px;font-size:12px;line-height:12px;color:#000;font-weight:700;transform:scaleX(1.2300);">4.99573</span><span class="t" style="left:864.75px;top:912.00px;font-size:12px;line-height:12px;color:#800000;font-weight:700;transform:scaleX(1.2500);">-0.10427</span><span class="t" style="left:1358.64px;top:91.00px;font-size:12px;line-height:12px;color:#0000ff;font-weight:700;transform:scaleX(1.1602);">Positive Pin (VCC)</span><div style="position:absolute;left:0;top:0;width:1554px;height:1080px;overflow:hidden"><span class="t" style="left:1377.91px;top:109.00px;font-size:12px;line-height:12px;color:#000;transform:scaleX(0.9950);">UPD431000AGW-B15_SOJ127P</span></div><span class="t" style="left:1395.93px;top:127.00px;font-size:12px;line-height:12px;color:#fff;transform:scaleX(1.0714);">Node12858!!32::VCC</span><span class="t" style="left:1358.61px;top:145.00px;font-size:12px;line-height:12px;color:#0000ff;font-weight:700;transform:scaleX(1.1933);">Negative Pin (0)</span><span class="t" style="left:1565.45px;top:91.00px;font-size:12px;line-height:12px;color:#000;transform:scaleX(1.0482);">Pin/Node Name</span><span class="t" style="left:1665.52px;top:91.00px;font-size:12px;line-height:12px;color:#000;transform:scaleX(1.0800);">Net</span><span class="t" style="left:1755.40px;top:91.00px;font-size:12px;line-height:12px;color:#000;transform:scaleX(1.0413);">Absolute</span><span class="t" style="left:1739.30px;top:107.00px;font-size:12px;line-height:12px;color:#000;transform:scaleX(1.0847);">Voltage (V)</span><span class="t" style="left:1840.29px;top:91.00px;font-size:12px;line-height:12px;color:#000;transform:scaleX(1.1079);">Flow-In</span><span class="t" style="left:1818.40px;top:107.00px;font-size:12px;line-height:12px;color:#000;transform:scaleX(1.1034);">Current (A)</span><span class="t" style="left:1565.30px;top:132.00px;font-size:12px;line-height:12px;color:#000;font-weight:700;transform:scaleX(1.2014);">Node12858...</span><span class="t" style="left:1666.60px;top:132.00px;font-size:12px;line-height:12px;color:#000;transform:scaleX(0.9600);">VCC</span><span class="t" style="left:1751.25px;top:132.00px;font-size:12px;line-height:12px;color:#000;font-weight:700;transform:scaleX(1.2105);">4.99929</span><span class="t" style="left:1859.60px;top:132.00px;font-size:12px;line-height:12px;color:#000;transform:scaleX(1.0391);">0.22</span>
</body></html>
